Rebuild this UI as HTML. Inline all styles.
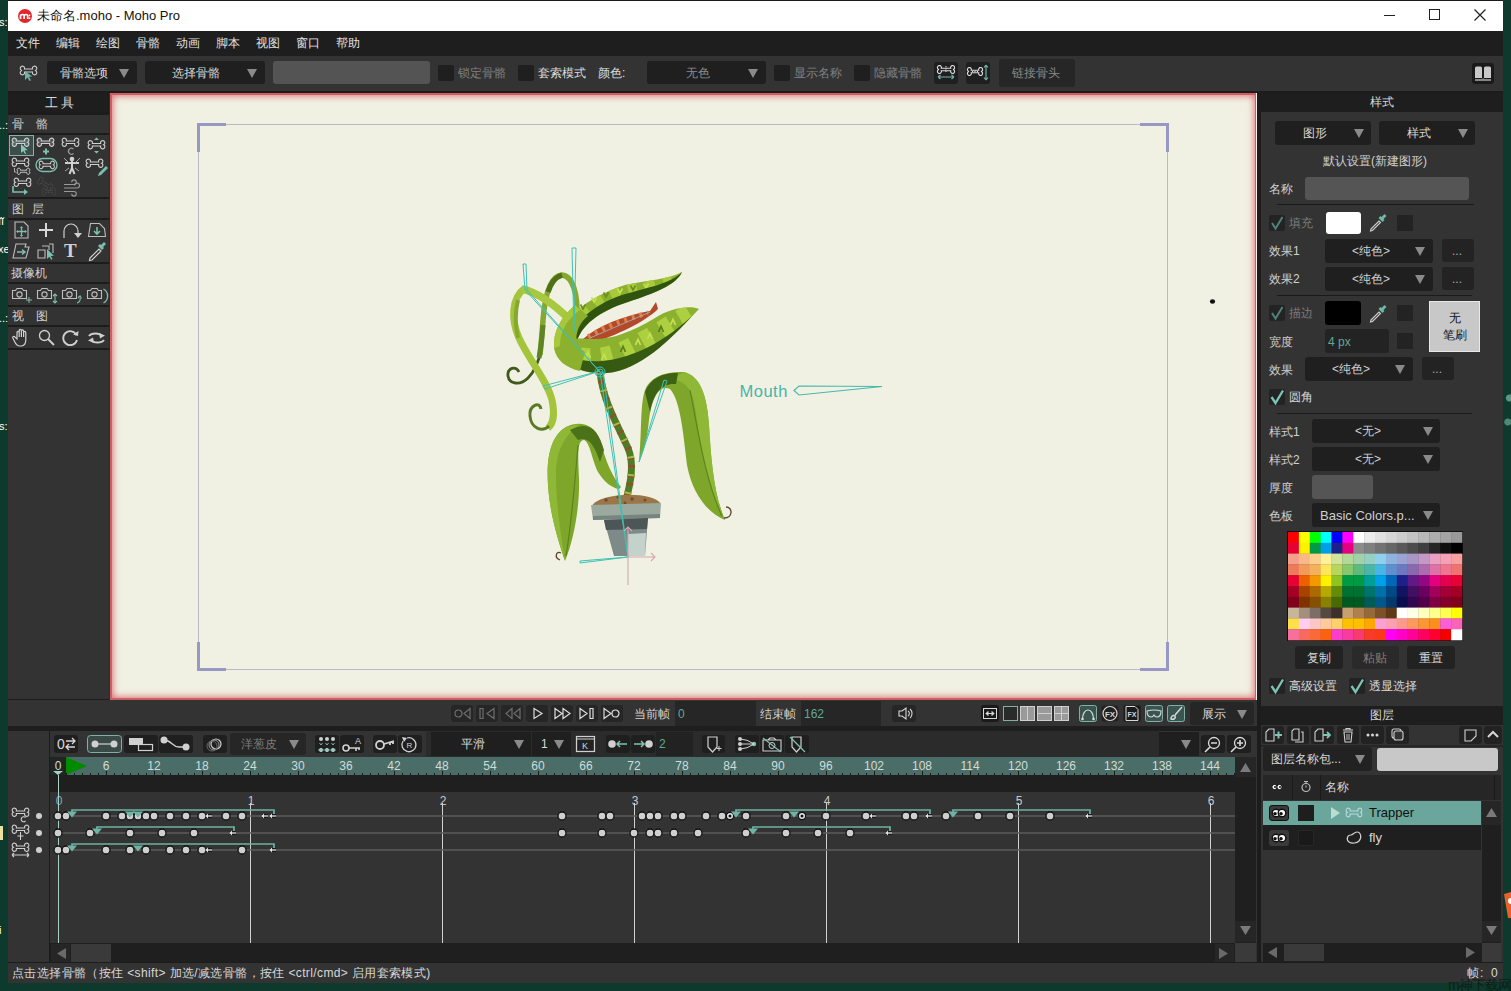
<!DOCTYPE html>
<html><head><meta charset="utf-8">
<style>
*{margin:0;padding:0;box-sizing:border-box}
html,body{width:1511px;height:991px;overflow:hidden;background:#0d3a2c;font-family:"Liberation Sans",sans-serif;color:#d8d8d8;font-size:12px}
.a{position:absolute}
.t{position:absolute;white-space:nowrap;line-height:1}
.dd{position:absolute;background:#1f1f1f;border-radius:3px}
.arr{position:absolute;width:0;height:0;border-left:5px solid transparent;border-right:5px solid transparent;border-top:9px solid #8a8a8a}
.cb{position:absolute;width:16px;height:16px;background:#1f1f1f;border-radius:2px}
.btn{position:absolute;background:#222;border-radius:3px}
svg{position:absolute;overflow:visible}
</style></head><body>
<!-- desktop fragments -->
<div class="t" style="left:-1px;top:17px;color:#fff;font-size:11px">s:</div>
<div class="t" style="left:-1px;top:120px;color:#fff;font-size:11px">..:</div>
<div class="t" style="left:-2px;top:216px;color:#fff;font-size:11px">ĩĭ</div>
<div class="t" style="left:-2px;top:244px;color:#fff;font-size:11px">xe</div>
<div class="t" style="left:-1px;top:313px;color:#fff;font-size:11px">..:</div>
<div class="t" style="left:-1px;top:421px;color:#fff;font-size:11px">s:</div>
<div class="a" style="left:0;top:826px;width:3px;height:14px;background:#f0e0a0"></div>
<div class="t" style="left:-1px;top:925px;color:#fff;font-size:11px">i</div>

<!-- title bar -->
<div class="a" style="left:8px;top:0;width:1495px;height:1px;background:#1a1a1a"></div>
<div class="a" style="left:8px;top:1px;width:1495px;height:30px;background:#fff"></div>
<div class="a" style="left:18px;top:9px;width:14px;height:14px;border-radius:50%;background:#e2262b"></div>
<svg style="left:18px;top:9px" width="14" height="14"><path d="M2.5,10V6.5q2.2-2 3.6,0V10M6.1,6.5q2.2-2 3.6,0V10" fill="none" stroke="#fff" stroke-width="1.7"/><circle cx="11.5" cy="6.3" r=".9" fill="#fff"/><circle cx="11.5" cy="9.2" r=".9" fill="#fff"/></svg>
<div class="t" style="left:37px;top:9px;color:#111;font-size:13px">未命名.moho - Moho Pro</div>
<div class="a" style="left:1384px;top:15px;width:11px;height:1px;background:#222"></div>
<div class="a" style="left:1429px;top:9px;width:11px;height:11px;border:1px solid #222"></div>
<svg style="left:1474px;top:9px" width="12" height="12"><path d="M0.5 0.5L11.5 11.5M11.5 0.5L0.5 11.5" stroke="#222" stroke-width="1.2"/></svg>

<!-- menu bar -->
<div class="a" style="left:8px;top:31px;width:1495px;height:25px;background:#1e1e1e"></div>
<div class="t" style="left:16px;top:37px;color:#e0e0e0">文件</div>
<div class="t" style="left:56px;top:37px;color:#e0e0e0">编辑</div>
<div class="t" style="left:96px;top:37px;color:#e0e0e0">绘图</div>
<div class="t" style="left:136px;top:37px;color:#e0e0e0">骨骼</div>
<div class="t" style="left:176px;top:37px;color:#e0e0e0">动画</div>
<div class="t" style="left:216px;top:37px;color:#e0e0e0">脚本</div>
<div class="t" style="left:256px;top:37px;color:#e0e0e0">视图</div>
<div class="t" style="left:296px;top:37px;color:#e0e0e0">窗口</div>
<div class="t" style="left:336px;top:37px;color:#e0e0e0">帮助</div>

<!-- toolbar -->
<div class="a" style="left:8px;top:56px;width:1495px;height:35px;background:#333"></div>
<div class="a" style="left:8px;top:91px;width:1495px;height:2px;background:#1c1c1c"></div>
<svg style="left:18px;top:62px" width="22" height="22" viewBox="0 0 22 22"><path d="M4 6.5a2.2 2.2 0 1 1 2.5-1.5h8a2.2 2.2 0 1 1 2.5 1.5a2.2 2.2 0 1 1 -2.5 1.5h-8a2.2 2.2 0 1 1 -2.5 -1.5z" fill="none" stroke="#cfcfcf" stroke-width="1.1" transform="translate(0,2)"/><path d="M7 9l0 9l2.5-2.5l2 3.5l1.5-.8l-2-3.4l3.3-.3z" fill="#6fb3a4"/></svg>
<div class="dd" style="left:47px;top:61px;width:90px;height:23px"></div>
<div class="t" style="left:60px;top:67px;color:#d8d8d8">骨骼选项</div>
<div class="arr" style="left:119px;top:69px"></div>
<div class="dd" style="left:145px;top:61px;width:120px;height:23px"></div>
<div class="t" style="left:172px;top:67px;color:#d8d8d8">选择骨骼</div>
<div class="arr" style="left:247px;top:69px"></div>
<div class="a" style="left:273px;top:61px;width:157px;height:23px;background:#545454;border-radius:3px"></div>
<div class="cb" style="left:438px;top:65px"></div>
<div class="t" style="left:458px;top:67px;color:#808080">锁定骨骼</div>
<div class="cb" style="left:518px;top:65px"></div>
<div class="t" style="left:538px;top:67px;color:#dcdcdc">套索模式</div>
<div class="t" style="left:598px;top:67px;color:#dcdcdc">颜色:</div>
<div class="dd" style="left:647px;top:61px;width:119px;height:23px"></div>
<div class="t" style="left:686px;top:67px;color:#8c8c8c">无色</div>
<div class="arr" style="left:748px;top:69px"></div>
<div class="cb" style="left:774px;top:65px"></div>
<div class="t" style="left:794px;top:67px;color:#808080">显示名称</div>
<div class="cb" style="left:854px;top:65px"></div>
<div class="t" style="left:874px;top:67px;color:#808080">隐藏骨骼</div>
<div class="btn" style="left:934px;top:62px;width:24px;height:22px;background:#1f1f1f"></div>
<svg style="left:934px;top:62px" width="24" height="22"><path d="M5 6.5a2 2 0 1 1 2.3-1.3h9.4a2 2 0 1 1 2.3 1.3a2 2 0 1 1 -2.3 1.3h-9.4a2 2 0 1 1 -2.3 -1.3z" fill="none" stroke="#ddd" stroke-width="1.1" transform="translate(0,1)"/><path d="M12 4v6" stroke="#ddd" stroke-dasharray="1.2 1.2"/><path d="M4 15h16M4 15l2.5-2M4 15l2.5 2M20 15l-2.5-2M20 15l-2.5 2" stroke="#6fb3a4" stroke-width="1.2" fill="none"/></svg>
<div class="btn" style="left:966px;top:62px;width:24px;height:22px;background:#1f1f1f"></div>
<svg style="left:966px;top:62px" width="24" height="22"><path d="M3 9.5a2 2 0 1 1 2.3-1.3h7.4a2 2 0 1 1 2.3 1.3a2 2 0 1 1 -2.3 1.3h-7.4a2 2 0 1 1 -2.3 -1.3z" fill="none" stroke="#ddd" stroke-width="1.1"/><path d="M6 9.5h7" stroke="#ddd" stroke-dasharray="1.2 1.2"/><path d="M20 3v15M20 3l-2 2.5M20 3l2 2.5M20 18l-2-2.5M20 18l2-2.5" stroke="#6fb3a4" stroke-width="1.2" fill="none"/></svg>
<div class="btn" style="left:999px;top:59px;width:76px;height:28px;background:#262626"></div>
<div class="t" style="left:1012px;top:67px;color:#8a8a8a">链接骨头</div>
<div class="btn" style="left:1472px;top:63px;width:22px;height:21px;background:#1a1a1a"></div>
<svg style="left:1472px;top:63px" width="22" height="21"><path d="M3,15V5q0-1.5 1.5-1.5h4q1.5,0 1.5,1.5V15zM12,15V5q0-1.5 1.5-1.5h4q1.5,0 1.5,1.5V15z" fill="#c8c8c8"/><path d="M3,17h16" stroke="#d0d0d0" stroke-width="1.2"/><path d="M11,15v2.5" stroke="#888" stroke-width="1"/></svg>

<!--TOOLBAR-->

<svg width="0" height="0" style="position:absolute"><defs>
<path id="bn" d="M5.1,3.4H14.9A2.5,2.5 0 1 1 18.28,5A2.5,2.5 0 1 1 14.9,6.6H5.1A2.5,2.5 0 1 1 1.72,5A2.5,2.5 0 1 1 5.1,3.4Z"/>
<path id="cam" d="M1.5,4.5h3l1.5-2h5l1.5,2h3v8h-14z"/>
</defs></svg>
<div class="a" style="left:8px;top:93px;width:101px;height:606px;background:#333"></div>
<div class="a" style="left:8px;top:93px;width:101px;height:19px;background:#1e1e1e"></div>
<div class="t" style="left:45px;top:96px;font-size:13px;color:#d8d8d8;letter-spacing:3px">工具</div>
<!-- separators -->
<div class="a" style="left:8px;top:112px;width:101px;height:3px;background:#1c1c1c"></div>
<div class="a" style="left:8px;top:133px;width:101px;height:2px;background:#1c1c1c"></div>
<div class="a" style="left:8px;top:197px;width:101px;height:2px;background:#1c1c1c"></div>
<div class="a" style="left:8px;top:218px;width:101px;height:2px;background:#1c1c1c"></div>
<div class="a" style="left:8px;top:262px;width:101px;height:2px;background:#1c1c1c"></div>
<div class="a" style="left:8px;top:282px;width:101px;height:2px;background:#1c1c1c"></div>
<div class="a" style="left:8px;top:305px;width:101px;height:2px;background:#1c1c1c"></div>
<div class="a" style="left:8px;top:325px;width:101px;height:2px;background:#1c1c1c"></div>
<div class="a" style="left:8px;top:348px;width:101px;height:2px;background:#1c1c1c"></div>
<div class="a" style="left:8px;top:699px;width:101px;height:1px;background:#1c1c1c"></div>
<div class="t" style="left:12px;top:118px;font-size:12px;color:#d0d0d0">骨</div>
<div class="t" style="left:36px;top:118px;font-size:12px;color:#d0d0d0">骼</div>
<div class="t" style="left:12px;top:203px;font-size:12px;color:#d0d0d0">图</div>
<div class="t" style="left:32px;top:203px;font-size:12px;color:#d0d0d0">层</div>
<div class="t" style="left:11px;top:267px;font-size:12px;color:#d0d0d0">摄像机</div>
<div class="t" style="left:12px;top:310px;font-size:12px;color:#d0d0d0">视</div>
<div class="t" style="left:36px;top:310px;font-size:12px;color:#d0d0d0">图</div>
<!-- bone tools -->
<div class="a" style="left:9px;top:135px;width:25px;height:21px;background:#3b4e4a;border:1px solid #88b0a6"></div>
<svg style="left:12px;top:138px" width="20" height="16"><use href="#bn" transform="translate(0,0) scale(.85)" fill="#5a6a66" stroke="#d0d0d0" stroke-width="1.2"/><path d="M9,6v9l2.2-2l1.8,3l1.2-.6l-1.7-3l3-.3z" fill="#8cc4b6"/></svg>
<svg style="left:37px;top:138px" width="20" height="17"><use href="#bn" transform="scale(.85)" fill="#555" stroke="#d0d0d0" stroke-width="1.2"/><path d="M9,10.5v6M6,13.5h6" stroke="#7dbfae" stroke-width="2"/></svg>
<svg style="left:62px;top:138px" width="20" height="17"><use href="#bn" transform="scale(.85)" fill="none" stroke="#d0d0d0" stroke-width="1.2"/><path d="M11.5,11a3,3 0 1 0 0,4.5" fill="none" stroke="#9a9a9a" stroke-width="1.3"/></svg>
<svg style="left:87px;top:137px" width="20" height="17"><use href="#bn" transform="translate(1,3.5) scale(.85)" fill="none" stroke="#d0d0d0" stroke-width="1.2"/><path d="M7,3h5l-2.5-2.5zM7,14h5l-2.5,2.5z" fill="#7dbfae"/></svg>
<svg style="left:12px;top:158px" width="20" height="18"><use href="#bn" transform="scale(.85)" fill="none" stroke="#d0d0d0" stroke-width="1.2"/><use href="#bn" transform="translate(5,10) scale(.65)" fill="none" stroke="#d0d0d0" stroke-width="1.4"/><path d="M2.5,10v4h2" fill="none" stroke="#aaa" stroke-width="1"/></svg>
<svg style="left:35px;top:157px" width="24" height="17"><rect x="1" y="1.5" width="21" height="13" rx="6.5" fill="none" stroke="#7dbfae" stroke-width="1.4"/><use href="#bn" transform="translate(4,4) scale(.78)" fill="none" stroke="#d0d0d0" stroke-width="1.3"/></svg>
<svg style="left:62px;top:156px" width="20" height="19"><circle cx="10" cy="3" r="2.3" fill="#d0d0d0"/><path d="M10,5v7M10,12l-2.5,6M10,12l2.5,6M3,7h14" stroke="#d0d0d0" stroke-width="2" fill="none"/><path d="M2,2l5,5M18,2l-5,5M3,15l4-3M17,15l-4-3" stroke="#aaa" stroke-width="1"/></svg>
<svg style="left:86px;top:158px" width="22" height="18"><use href="#bn" transform="translate(0,1) scale(.85)" fill="none" stroke="#d0d0d0" stroke-width="1.2"/><path d="M13,15l7-7l2,2l-7,7l-3,1z" fill="#7dbfae"/></svg>
<svg style="left:11px;top:178px" width="22" height="18"><use href="#bn" transform="translate(3,0) scale(.85)" fill="none" stroke="#d0d0d0" stroke-width="1.2"/><path d="M2,8v6h12" fill="none" stroke="#7dbfae" stroke-width="1.6"/><path d="M13,11l4,3l-4,3z" fill="#7dbfae"/></svg>
<svg style="left:36px;top:178px" width="22" height="19" opacity=".35"><use href="#bn" transform="translate(1,2) rotate(35 8 4) scale(.8)" fill="none" stroke="#aaa" stroke-width="1" stroke-dasharray="1 1"/><use href="#bn" transform="translate(6,10) scale(.7)" fill="none" stroke="#aaa" stroke-width="1" stroke-dasharray="1 1"/></svg>
<svg style="left:62px;top:179px" width="20" height="16"><path d="M2,5.5H12a2.3,2.3 0 1 0 -2.3,-2.3M2,9H15a2.5,2.5 0 1 0 -2.5,-2.5M2,12.5H12a2.3,2.3 0 1 1 -2.3,2.3" fill="none" stroke="#9a9a9a" stroke-width="1.1"/></svg>
<!-- layer tools -->
<svg style="left:13px;top:221px" width="18" height="18"><path d="M2,1h9l4,4v12h-13z" fill="none" stroke="#bdbdbd" stroke-width="1.1"/><path d="M8.5,6v9M4,10.5h9" stroke="#7dbfae" stroke-width="1.3"/><path d="M8.5,5l-1.5,2h3zM8.5,16l-1.5-2h3zM3,10.5l2-1.5v3zM14,10.5l-2-1.5v3z" fill="#7dbfae"/></svg>
<svg style="left:37px;top:222px" width="18" height="16"><path d="M9,1v14M2,8h14" stroke="#d8d8d8" stroke-width="2"/></svg>
<svg style="left:62px;top:221px" width="20" height="18"><path d="M2,17v-7a7,7 0 0 1 14,0v2" fill="none" stroke="#d0d0d0" stroke-width="1.2"/><path d="M12,12h8l-4,5z" fill="#d0d0d0"/></svg>
<svg style="left:87px;top:222px" width="20" height="16"><path d="M1.5,14.5l2-13h9l5,5l1,8z" fill="none" stroke="#bdbdbd" stroke-width="1.1"/><path d="M10,5v6M7,9l3,3l3-3" stroke="#7dbfae" stroke-width="1.6" fill="none"/></svg>
<svg style="left:12px;top:242px" width="20" height="18"><path d="M1,16l3-14h10l-1,3l4,0l-3,11z" fill="none" stroke="#bdbdbd" stroke-width="1.1"/><path d="M5,10h8M10,7.5l3,2.5l-3,2.5" stroke="#7dbfae" stroke-width="1.5" fill="none"/></svg>
<svg style="left:36px;top:242px" width="20" height="18"><path d="M2,8h7v8h-7zM6,4h7v4M13,2h4v9" fill="none" stroke="#bdbdbd" stroke-width="1.1"/><path d="M11,7v10l2.3-2.2l2,3l1.2-.7l-1.8-3l3.2-.3z" fill="#7dbfae"/></svg>
<div class="t" style="left:64px;top:241px;font-family:'Liberation Serif',serif;font-size:19px;font-weight:bold;color:#d0d0d0">T</div>
<svg style="left:87px;top:241px" width="20" height="20"><path d="M3,17l9-9l2,2l-9,9l-2.5,.5z" fill="none" stroke="#d0d0d0" stroke-width="1.2"/><path d="M11,5l2-2l1,1l3-3l2,2l-3,3l1,1l-2,2z" fill="#7dbfae"/></svg>
<!-- camera tools -->
<svg style="left:11px;top:286px" width="22" height="17"><use href="#cam" transform="translate(0,0)" fill="none" stroke="#bdbdbd" stroke-width="1.1"/><circle cx="8.5" cy="8.5" r="2.6" fill="none" stroke="#bdbdbd" stroke-width="1.1"/><path d="M18,11v6M15,14h6" stroke="#7dbfae" stroke-width="1"/></svg>
<svg style="left:36px;top:286px" width="22" height="17"><use href="#cam" fill="none" stroke="#bdbdbd" stroke-width="1.1"/><circle cx="8.5" cy="8.5" r="2.6" fill="none" stroke="#bdbdbd" stroke-width="1.1"/><path d="M19,8v9M17,10l2-2l2,2M17,15l2,2l2-2" stroke="#7dbfae" stroke-width="1.1" fill="none"/></svg>
<svg style="left:61px;top:286px" width="22" height="17"><use href="#cam" fill="none" stroke="#bdbdbd" stroke-width="1.1"/><circle cx="8.5" cy="8.5" r="2.6" fill="none" stroke="#bdbdbd" stroke-width="1.1"/><path d="M16,17a4,4 0 0 0 3-5M17,12l2-2l1.5,2.5" stroke="#7dbfae" stroke-width="1.1" fill="none"/></svg>
<svg style="left:86px;top:286px" width="22" height="18"><use href="#cam" fill="none" stroke="#bdbdbd" stroke-width="1.1"/><circle cx="8.5" cy="8.5" r="2.6" fill="none" stroke="#bdbdbd" stroke-width="1.1"/><path d="M17.5,3a8,8 0 0 1 0,14" stroke="#7dbfae" stroke-width="1.3" fill="none"/></svg>
<!-- view tools -->
<svg style="left:12px;top:328px" width="20" height="19"><path d="M5,11V4.5a1.1,1.1 0 0 1 2.2,0V9V2.5a1.1,1.1 0 0 1 2.2,0V9V3a1.1,1.1 0 0 1 2.2,0V9V4.5a1.1,1.1 0 0 1 2.2,0V12q0,5 -4,6h-2q-3,0 -5,-4l-2,-4a1,1 0 0 1 2,-1z" fill="none" stroke="#d0d0d0" stroke-width="1.2"/></svg>
<svg style="left:38px;top:329px" width="18" height="18"><circle cx="6.5" cy="6.5" r="5" fill="none" stroke="#d0d0d0" stroke-width="1.3"/><path d="M10,10l6,6" stroke="#d0d0d0" stroke-width="1.8"/></svg>
<svg style="left:62px;top:329px" width="18" height="18"><path d="M14.5,6A7,7 0 1 0 15,11" fill="none" stroke="#d0d0d0" stroke-width="1.8"/><path d="M11,5.5l5,1.5l.5-5z" fill="#d0d0d0"/></svg>
<svg style="left:86px;top:330px" width="21" height="16"><path d="M3,6a7,4 0 0 1 13,0M18,10a7,4 0 0 1 -13,0" fill="none" stroke="#d0d0d0" stroke-width="2"/><path d="M13,3l6,2.5l-5,3zM8,13l-6-2.5l5-3z" fill="#d0d0d0"/></svg>

<!--TOOLS-->

<div class="a" style="left:110px;top:93px;width:1147px;height:607px;background:#f0f1e3;box-shadow:inset 0 0 0 2px #cd5f63,inset 0 0 7px 3px #dc7276"></div>
<div class="a" style="left:1256px;top:93px;width:1px;height:607px;background:#fbeeee"></div>
<svg style="left:110px;top:93px" width="1147" height="607" viewBox="110 93 1147 607">
<rect x="198.5" y="124.5" width="969" height="545" fill="none" stroke="#bbbac4" stroke-width="1"/>
<path d="M198.5,152V124.5H226M1140,124.5H1167.5V152M1167.5,642V669.5H1140M226,669.5H198.5V642" fill="none" stroke="#9997c3" stroke-width="3"/>
<ellipse cx="1212.5" cy="301.5" rx="2.6" ry="2.2" fill="#111"/>
<!-- plant -->
<g id="plant">
<defs>
<clipPath id="cu"><path d="M557,345 C560,320 585,298 625,285 C650,280 670,279 682,272 C676,285 655,293 628,302 C600,311 580,325 576,345 Z"/></clipPath>
<clipPath id="cl"><path d="M557,345 C560,365 585,375 607,373 C640,370 670,340 699,309 C690,305 670,308 655,318 C630,333 610,340 590,339 C580,338 572,338 557,345 Z"/></clipPath>
</defs>
<!-- arch tendril -->
<path d="M541,350 C538,365 534,372 528,378 C520,386 509,384 508,376 C507,368 516,365 519,372" fill="none" stroke="#3f5a1a" stroke-width="2.8"/>
<path d="M577,318 C578,295 573,276 562,275 C550,276 545,295 543,320 C542,335 541,345 540,355" fill="none" stroke="#86a830" stroke-width="5.5"/>
<path d="M548,292 C551,282 556,277 562,275" fill="none" stroke="#4f7018" stroke-width="5.5"/>
<path d="M543,325 C542,338 541,348 539,358" fill="none" stroke="#5f8424" stroke-width="5"/>
<!-- big light ribbon -->
<path d="M525,288 C511,298 511,320 519,338 C529,360 547,380 552,400 C555,414 553,424 548,428" fill="none" stroke="#a4c43c" stroke-width="7"/>
<path d="M519,300 C516,312 516,325 519,338" fill="none" stroke="#86a830" stroke-width="4" transform="translate(-1,0)"/>
<path d="M549,426 C542,433 531,428 530,416 C529,405 540,401 541,409" fill="none" stroke="#5a7a24" stroke-width="3"/>
<path d="M522,289 C540,293 556,306 570,320" fill="none" stroke="#a8c840" stroke-width="7.5"/>
<!-- left leaf -->
<path d="M621,487 C612,476 606,462 600,440 C594,424 580,420 566,427 C552,435 546,455 548,485 C550,515 558,540 565,561 C574,540 580,505 579,478 C578,455 577,440 584,440 C590,442 592,460 598,472 C604,482 612,488 619,489Z" fill="#7ea62a"/>
<path d="M566,427 C552,435 546,455 548,485 C550,515 558,540 565,561 C560,530 556,500 556,475 C556,450 565,435 580,424 Z" fill="#8fb836"/>
<path d="M570,430 C590,420 598,430 604,450 L600,462 C594,444 588,436 578,440 Z" fill="#4b7218"/>
<path d="M578,445 C575,480 572,520 566,556" fill="none" stroke="#5b8420" stroke-width="1.2"/>
<path d="M561,553 C556,550 554,558 560,560" fill="none" stroke="#5a4030" stroke-width="1.3"/>
<!-- right leaf -->
<path d="M639,462 C642,430 640,405 645,390 C650,377 665,371 684,372 C700,376 707,395 709,425 C711,460 714,495 725,520 C706,512 692,492 687,465 C683,430 680,400 670,389 C660,384 652,396 649,420 C647,440 644,452 639,462Z" fill="#7ea62a"/>
<path d="M684,372 C700,376 707,395 709,425 C711,460 714,495 725,520 C708,490 700,450 697,420 C694,395 690,382 672,379Z" fill="#8fb836"/>
<path d="M645,392 C650,378 664,372 678,373 L676,384 C662,383 654,392 650,412 Z" fill="#3e6214"/>
<path d="M690,390 C698,430 705,480 722,516" fill="none" stroke="#5b8420" stroke-width="1.2"/>
<path d="M724,518 C733,518 733,507 726,507" fill="none" stroke="#5a4030" stroke-width="1.3"/>
<!-- stem -->
<path d="M600,372 C603,400 615,420 628,448 C635,465 630,485 626,500" fill="none" stroke="#4f7a26" stroke-width="7"/>
<path d="M600,372 C603,400 615,420 628,448 C635,465 630,485 626,500" fill="none" stroke="#9a4a2c" stroke-width="7" stroke-dasharray="3 6 2 7"/>
<path d="M600,372 C603,400 615,420 628,448 C635,465 630,485 626,500" fill="none" stroke="#9cc040" stroke-width="7" stroke-dasharray="2 16"/>
<!-- upper jaw -->
<path d="M557,345 C560,320 585,298 625,285 C650,280 670,279 682,272 C676,285 655,293 628,302 C600,311 580,325 576,345 Z" fill="#8cb12e"/>
<g clip-path="url(#cu)"><path d="M562,345 C570,318 595,298 630,289 C655,284 670,281 682,274" fill="none" stroke="#a9c93c" stroke-width="16" stroke-dasharray="9 9"/></g>
<path d="M580.5,304.5L583,309L585.5,304.5" fill="none" stroke="#6a9020" stroke-width="1.6"/><path d="M591.5,297.5L594,302L596.5,297.5" fill="none" stroke="#c4e050" stroke-width="1.6"/><path d="M603.5,292.5L606,297L608.5,292.5" fill="none" stroke="#6a9020" stroke-width="1.6"/><path d="M617.5,288.5L620,293L622.5,288.5" fill="none" stroke="#c4e050" stroke-width="1.6"/><path d="M630.5,285.5L633,290L635.5,285.5" fill="none" stroke="#6a9020" stroke-width="1.6"/><path d="M643.5,283.5L646,288L648.5,283.5" fill="none" stroke="#c4e050" stroke-width="1.6"/>
<path d="M682,272 C676,285 655,293 628,302 C600,311 580,325 576,345 L567,345 C571,325 592,305 622,295 C650,287 672,283 682,272 Z" fill="#30540f"/>
<!-- tongue -->
<path d="M583,339 C598,326 622,316 650,311 L656,302 L658,309 C645,322 615,336 592,343 Z" fill="#b5472a"/>
<path d="M588,337 C605,327 625,319 648,313" fill="none" stroke="#dc8048" stroke-width="5" stroke-dasharray="3 5"/>
<path d="M590,338 L650,312" fill="none" stroke="#9cc0b8" stroke-width=".8"/>
<!-- lower jaw -->
<path d="M557,345 C560,365 585,375 607,373 C640,370 670,340 699,309 C690,305 670,308 655,318 C630,333 610,340 590,339 C580,338 572,338 557,345 Z" fill="#8cb12e"/>
<g clip-path="url(#cl)"><path d="M560,348 C575,362 600,360 622,352 C648,340 672,324 697,310" fill="none" stroke="#acd040" stroke-width="20" stroke-dasharray="11 11"/></g>
<path d="M570.5,355L573,349.5L575.5,355" fill="none" stroke="#c4e050" stroke-width="1.8"/><path d="M585.5,358L588,352.5L590.5,358" fill="none" stroke="#c4e050" stroke-width="1.8"/><path d="M601.5,360L604,354.5L606.5,360" fill="none" stroke="#c4e050" stroke-width="1.8"/><path d="M620.5,352L623,346.5L625.5,352" fill="none" stroke="#5a8018" stroke-width="1.8"/><path d="M635.5,345L638,339.5L640.5,345" fill="none" stroke="#c4e050" stroke-width="1.8"/><path d="M647.5,339L650,333.5L652.5,339" fill="none" stroke="#c4e050" stroke-width="1.8"/><path d="M658.5,332L661,326.5L663.5,332" fill="none" stroke="#5a8018" stroke-width="1.8"/><path d="M670.5,325L673,319.5L675.5,325" fill="none" stroke="#c4e050" stroke-width="1.8"/>
<path d="M557,345 C560,365 585,375 607,373 C640,370 670,340 692,316 C668,338 640,355 610,360 C585,364 566,358 557,345 Z" fill="#365a12"/>
<path d="M575,305 C560,318 553,332 554,348 C556,360 566,368 580,371 L585,352 C578,348 575,340 577,333 C579,325 583,320 588,316 Z" fill="#8cb12e"/><path d="M575,305 C560,318 553,332 554,348 L560,346 C560,332 566,320 580,310Z" fill="#a6c83a"/>
<!-- pot -->
<path d="M592,506 C598,493 652,490 661,504Z" fill="#9b7648"/>
<g fill="#70502c"><circle cx="606" cy="500" r="1.8"/><circle cx="618" cy="497" r="1.6"/><circle cx="632" cy="499" r="1.8"/><circle cx="645" cy="500" r="1.6"/><circle cx="625" cy="503" r="1.4"/></g>
<path d="M591,505 L661,503 L660,518 L593,520Z" fill="#9ba99f"/>
<path d="M593,516 L660,514 L660,518 L593,520Z" fill="#77857f"/>
<path d="M604,520 L648,518 L645,556 L614,556Z" fill="#7d8a88"/>
<path d="M604,520 L648,518 L647,529 L606,530Z" fill="#4c5656"/>
<path d="M628,534 L646,533 L645,556 L628,556Z" fill="#c3d3cb"/>
<!-- bones -->
<g fill="none" stroke="#3ec1b5" stroke-width="1">
<path d="M572,248 L574,332 L576,248Z"/>
<path d="M523,264 L525,290 L600,372 L527,290 L526,264Z"/>
<path d="M543,386 L600,371 L545,389Z"/>
<path d="M600,372 L628,557 L603,372Z"/>
<path d="M664,380 L639,462 L667,381Z"/>
<path d="M580,561 L628,557 L580,563Z"/>
<circle cx="600" cy="372" r="5"/><circle cx="600" cy="372" r="3"/>
</g>
<g fill="none" stroke="#d4a8ae" stroke-width="1.1"><path d="M628,527v58M628,557h27M651,553l4,4l-4,4M624,531l4,-4l4,4"/></g>
</g>

<text x="739.5" y="397" font-family="Liberation Sans, sans-serif" font-size="16.5" letter-spacing=".5" fill="#45b5aa">Mouth</text>
<path d="M794,390.5L799,386L882,386.5L799,395Z" fill="none" stroke="#45b8ac" stroke-width="1.1"/>
</svg>

<!--CANVAS-->

<div class="a" style="left:1257px;top:93px;width:4px;height:890px;background:#1c1c1c"></div>
<div class="a" style="left:1261px;top:93px;width:242px;height:613px;background:#333"></div>
<div class="a" style="left:1261px;top:93px;width:242px;height:19px;background:#1e1e1e"></div>
<div class="t" style="left:1370px;top:96px;font-size:12px;color:#d8d8d8">样式</div>
<div class="dd" style="left:1275px;top:121px;width:96px;height:24px"></div>
<div class="t" style="left:1303px;top:127px;color:#d8d8d8">图形</div>
<div class="arr" style="left:1354px;top:129px"></div>
<div class="dd" style="left:1379px;top:121px;width:96px;height:24px"></div>
<div class="t" style="left:1407px;top:127px;color:#d8d8d8">样式</div>
<div class="arr" style="left:1458px;top:129px"></div>
<div class="t" style="left:1323px;top:155px;color:#d0d0d0">默认设置(新建图形)</div>
<div class="t" style="left:1269px;top:183px;color:#d0d0d0">名称</div>
<div class="a" style="left:1305px;top:177px;width:164px;height:23px;background:#555;border-radius:3px"></div>
<div class="a" style="left:1277px;top:204px;width:197px;height:1px;background:#1a1a1a"></div>
<!-- fill -->
<div class="cb" style="left:1269px;top:215px;background:#232323"></div>
<svg style="left:1269px;top:215px" width="16" height="16"><path d="M3,8l3.5,5.5L13.5,2" fill="none" stroke="#4f8277" stroke-width="2"/></svg>
<div class="t" style="left:1289px;top:217px;color:#7c7c7c">填充</div>
<div class="a" style="left:1326px;top:212px;width:35px;height:22px;background:#fff;border-radius:3px"></div>
<svg style="left:1369px;top:213px" width="18" height="18"><path d="M2,16l8-8l1.5,1.5l-8,8l-2,.5z" fill="none" stroke="#cfcfcf" stroke-width="1.1"/><path d="M9.5,5l2-2l1,1l3-3l2,2l-3,3l1,1l-2,2z" fill="#6fb8a8"/></svg>
<div class="a" style="left:1397px;top:215px;width:16px;height:16px;background:#232323"></div>
<div class="t" style="left:1269px;top:245px;color:#d0d0d0">效果1</div>
<div class="dd" style="left:1325px;top:239px;width:108px;height:24px"></div>
<div class="t" style="left:1352px;top:245px;color:#d0d0d0">&lt;纯色&gt;</div>
<div class="arr" style="left:1415px;top:247px"></div>
<div class="btn" style="left:1442px;top:239px;width:32px;height:23px;background:#232323"></div>
<div class="t" style="left:1452px;top:245px;color:#aaa">...</div>
<div class="t" style="left:1269px;top:273px;color:#d0d0d0">效果2</div>
<div class="dd" style="left:1325px;top:267px;width:108px;height:24px"></div>
<div class="t" style="left:1352px;top:273px;color:#d0d0d0">&lt;纯色&gt;</div>
<div class="arr" style="left:1415px;top:275px"></div>
<div class="btn" style="left:1442px;top:267px;width:32px;height:23px;background:#232323"></div>
<div class="t" style="left:1452px;top:273px;color:#aaa">...</div>
<div class="a" style="left:1277px;top:295px;width:195px;height:1px;background:#1a1a1a"></div>
<!-- stroke -->
<div class="cb" style="left:1269px;top:305px;background:#232323"></div>
<svg style="left:1269px;top:305px" width="16" height="16"><path d="M3,8l3.5,5.5L13.5,2" fill="none" stroke="#4f8277" stroke-width="2"/></svg>
<div class="t" style="left:1289px;top:307px;color:#7c7c7c">描边</div>
<div class="a" style="left:1325px;top:301px;width:36px;height:24px;background:#000;border-radius:3px"></div>
<svg style="left:1369px;top:304px" width="18" height="18"><path d="M2,16l8-8l1.5,1.5l-8,8l-2,.5z" fill="none" stroke="#cfcfcf" stroke-width="1.1"/><path d="M9.5,5l2-2l1,1l3-3l2,2l-3,3l1,1l-2,2z" fill="#6fb8a8"/></svg>
<div class="a" style="left:1397px;top:305px;width:16px;height:16px;background:#232323"></div>
<div class="a" style="left:1429px;top:301px;width:51px;height:51px;background:#c8c8c8;border:1px solid #e8e8e8"></div>
<div class="t" style="left:1449px;top:312px;color:#111">无</div>
<div class="t" style="left:1443px;top:329px;color:#111">笔刷</div>
<div class="t" style="left:1269px;top:336px;color:#d0d0d0">宽度</div>
<div class="a" style="left:1325px;top:329px;width:64px;height:24px;background:#232323;border-radius:3px"></div>
<div class="t" style="left:1328px;top:336px;color:#5fa898;font-size:12px">4 px</div>
<div class="a" style="left:1397px;top:333px;width:16px;height:16px;background:#232323"></div>
<div class="t" style="left:1269px;top:364px;color:#d0d0d0">效果</div>
<div class="dd" style="left:1305px;top:357px;width:108px;height:24px"></div>
<div class="t" style="left:1332px;top:363px;color:#d0d0d0">&lt;纯色&gt;</div>
<div class="arr" style="left:1395px;top:365px"></div>
<div class="btn" style="left:1422px;top:357px;width:32px;height:23px;background:#232323"></div>
<div class="t" style="left:1432px;top:363px;color:#aaa">...</div>
<div class="cb" style="left:1269px;top:389px;background:#232323"></div>
<svg style="left:1269px;top:389px" width="16" height="16"><path d="M2.5,8l4,6L14,1.5" fill="none" stroke="#7dc4b4" stroke-width="2.3"/></svg>
<div class="t" style="left:1289px;top:391px;color:#d8d8d8">圆角</div>
<div class="a" style="left:1277px;top:413px;width:195px;height:1px;background:#1a1a1a"></div>
<div class="t" style="left:1269px;top:426px;color:#d0d0d0">样式1</div>
<div class="dd" style="left:1312px;top:419px;width:128px;height:24px"></div>
<div class="t" style="left:1355px;top:425px;color:#d0d0d0">&lt;无&gt;</div>
<div class="arr" style="left:1423px;top:427px"></div>
<div class="t" style="left:1269px;top:454px;color:#d0d0d0">样式2</div>
<div class="dd" style="left:1312px;top:447px;width:128px;height:24px"></div>
<div class="t" style="left:1355px;top:453px;color:#d0d0d0">&lt;无&gt;</div>
<div class="arr" style="left:1423px;top:455px"></div>
<div class="t" style="left:1269px;top:482px;color:#d0d0d0">厚度</div>
<div class="a" style="left:1312px;top:475px;width:61px;height:24px;background:#555;border-radius:3px"></div>
<div class="t" style="left:1269px;top:510px;color:#d0d0d0">色板</div>
<div class="dd" style="left:1312px;top:503px;width:128px;height:24px"></div>
<div class="t" style="left:1320px;top:509px;color:#d0d0d0;font-size:13px">Basic Colors.p...</div>
<div class="arr" style="left:1423px;top:511px"></div>
<div class="a" style="left:1287px;top:531px;width:176px;height:110px;background:#111"></div>
<svg style="left:1288px;top:532px" width="174" height="108">
<rect x="0.00" y="0.00" width="11.18" height="11.10" fill="#ff0000"/>
<rect x="10.88" y="0.00" width="11.18" height="11.10" fill="#ffff00"/>
<rect x="21.75" y="0.00" width="11.18" height="11.10" fill="#00ff00"/>
<rect x="32.62" y="0.00" width="11.18" height="11.10" fill="#00ffff"/>
<rect x="43.50" y="0.00" width="11.18" height="11.10" fill="#0000ff"/>
<rect x="54.38" y="0.00" width="11.18" height="11.10" fill="#ff00ff"/>
<rect x="65.25" y="0.00" width="11.18" height="11.10" fill="#ffffff"/>
<rect x="76.12" y="0.00" width="11.18" height="11.10" fill="#ebebeb"/>
<rect x="87.00" y="0.00" width="11.18" height="11.10" fill="#e0e0e0"/>
<rect x="97.88" y="0.00" width="11.18" height="11.10" fill="#d6d6d6"/>
<rect x="108.75" y="0.00" width="11.18" height="11.10" fill="#cccccc"/>
<rect x="119.62" y="0.00" width="11.18" height="11.10" fill="#c2c2c2"/>
<rect x="130.50" y="0.00" width="11.18" height="11.10" fill="#b8b8b8"/>
<rect x="141.38" y="0.00" width="11.18" height="11.10" fill="#adadad"/>
<rect x="152.25" y="0.00" width="11.18" height="11.10" fill="#a3a3a3"/>
<rect x="163.12" y="0.00" width="11.18" height="11.10" fill="#999999"/>
<rect x="0.00" y="10.80" width="11.18" height="11.10" fill="#e60033"/>
<rect x="10.88" y="10.80" width="11.18" height="11.10" fill="#fff100"/>
<rect x="21.75" y="10.80" width="11.18" height="11.10" fill="#009944"/>
<rect x="32.62" y="10.80" width="11.18" height="11.10" fill="#00a0e9"/>
<rect x="43.50" y="10.80" width="11.18" height="11.10" fill="#1d2088"/>
<rect x="54.38" y="10.80" width="11.18" height="11.10" fill="#e4007f"/>
<rect x="65.25" y="10.80" width="11.18" height="11.10" fill="#8c8c8c"/>
<rect x="76.12" y="10.80" width="11.18" height="11.10" fill="#7f7f7f"/>
<rect x="87.00" y="10.80" width="11.18" height="11.10" fill="#727272"/>
<rect x="97.88" y="10.80" width="11.18" height="11.10" fill="#666666"/>
<rect x="108.75" y="10.80" width="11.18" height="11.10" fill="#595959"/>
<rect x="119.62" y="10.80" width="11.18" height="11.10" fill="#4c4c4c"/>
<rect x="130.50" y="10.80" width="11.18" height="11.10" fill="#3f3f3f"/>
<rect x="141.38" y="10.80" width="11.18" height="11.10" fill="#262626"/>
<rect x="152.25" y="10.80" width="11.18" height="11.10" fill="#101010"/>
<rect x="163.12" y="10.80" width="11.18" height="11.10" fill="#000000"/>
<rect x="0.00" y="21.60" width="11.18" height="11.10" fill="#f5a089"/>
<rect x="10.88" y="21.60" width="11.18" height="11.10" fill="#f8b888"/>
<rect x="21.75" y="21.60" width="11.18" height="11.10" fill="#fbce8b"/>
<rect x="32.62" y="21.60" width="11.18" height="11.10" fill="#fff29a"/>
<rect x="43.50" y="21.60" width="11.18" height="11.10" fill="#d2e49a"/>
<rect x="54.38" y="21.60" width="11.18" height="11.10" fill="#b3d898"/>
<rect x="65.25" y="21.60" width="11.18" height="11.10" fill="#a0d3a8"/>
<rect x="76.12" y="21.60" width="11.18" height="11.10" fill="#95d0c5"/>
<rect x="87.00" y="21.60" width="11.18" height="11.10" fill="#8fd0ee"/>
<rect x="97.88" y="21.60" width="11.18" height="11.10" fill="#8eb3dd"/>
<rect x="108.75" y="21.60" width="11.18" height="11.10" fill="#9aa3d3"/>
<rect x="119.62" y="21.60" width="11.18" height="11.10" fill="#a896c4"/>
<rect x="130.50" y="21.60" width="11.18" height="11.10" fill="#c499c5"/>
<rect x="141.38" y="21.60" width="11.18" height="11.10" fill="#e8a0c4"/>
<rect x="152.25" y="21.60" width="11.18" height="11.10" fill="#f5a0b5"/>
<rect x="163.12" y="21.60" width="11.18" height="11.10" fill="#f6a0a0"/>
<rect x="0.00" y="32.40" width="11.18" height="11.10" fill="#ee7a5c"/>
<rect x="10.88" y="32.40" width="11.18" height="11.10" fill="#f29a5c"/>
<rect x="21.75" y="32.40" width="11.18" height="11.10" fill="#f5b05c"/>
<rect x="32.62" y="32.40" width="11.18" height="11.10" fill="#fde65c"/>
<rect x="43.50" y="32.40" width="11.18" height="11.10" fill="#b9d65c"/>
<rect x="54.38" y="32.40" width="11.18" height="11.10" fill="#88c76c"/>
<rect x="65.25" y="32.40" width="11.18" height="11.10" fill="#5fba7d"/>
<rect x="76.12" y="32.40" width="11.18" height="11.10" fill="#4ab5a8"/>
<rect x="87.00" y="32.40" width="11.18" height="11.10" fill="#45b6e6"/>
<rect x="97.88" y="32.40" width="11.18" height="11.10" fill="#5f8fcf"/>
<rect x="108.75" y="32.40" width="11.18" height="11.10" fill="#6e78c0"/>
<rect x="119.62" y="32.40" width="11.18" height="11.10" fill="#8a68b0"/>
<rect x="130.50" y="32.40" width="11.18" height="11.10" fill="#ad6bb0"/>
<rect x="141.38" y="32.40" width="11.18" height="11.10" fill="#e070a8"/>
<rect x="152.25" y="32.40" width="11.18" height="11.10" fill="#ef7490"/>
<rect x="163.12" y="32.40" width="11.18" height="11.10" fill="#ef7470"/>
<rect x="0.00" y="43.20" width="11.18" height="11.10" fill="#e60033"/>
<rect x="10.88" y="43.20" width="11.18" height="11.10" fill="#eb6100"/>
<rect x="21.75" y="43.20" width="11.18" height="11.10" fill="#f39800"/>
<rect x="32.62" y="43.20" width="11.18" height="11.10" fill="#fff100"/>
<rect x="43.50" y="43.20" width="11.18" height="11.10" fill="#8fc31f"/>
<rect x="54.38" y="43.20" width="11.18" height="11.10" fill="#009944"/>
<rect x="65.25" y="43.20" width="11.18" height="11.10" fill="#009944"/>
<rect x="76.12" y="43.20" width="11.18" height="11.10" fill="#009e96"/>
<rect x="87.00" y="43.20" width="11.18" height="11.10" fill="#00a0e9"/>
<rect x="97.88" y="43.20" width="11.18" height="11.10" fill="#0068b7"/>
<rect x="108.75" y="43.20" width="11.18" height="11.10" fill="#1d2088"/>
<rect x="119.62" y="43.20" width="11.18" height="11.10" fill="#601986"/>
<rect x="130.50" y="43.20" width="11.18" height="11.10" fill="#920783"/>
<rect x="141.38" y="43.20" width="11.18" height="11.10" fill="#e4007f"/>
<rect x="152.25" y="43.20" width="11.18" height="11.10" fill="#e5004f"/>
<rect x="163.12" y="43.20" width="11.18" height="11.10" fill="#e60033"/>
<rect x="0.00" y="54.00" width="11.18" height="11.10" fill="#a40026"/>
<rect x="10.88" y="54.00" width="11.18" height="11.10" fill="#a84200"/>
<rect x="21.75" y="54.00" width="11.18" height="11.10" fill="#ad6a00"/>
<rect x="32.62" y="54.00" width="11.18" height="11.10" fill="#b5aa00"/>
<rect x="43.50" y="54.00" width="11.18" height="11.10" fill="#638c0b"/>
<rect x="54.38" y="54.00" width="11.18" height="11.10" fill="#007130"/>
<rect x="65.25" y="54.00" width="11.18" height="11.10" fill="#007130"/>
<rect x="76.12" y="54.00" width="11.18" height="11.10" fill="#00736d"/>
<rect x="87.00" y="54.00" width="11.18" height="11.10" fill="#0071a7"/>
<rect x="97.88" y="54.00" width="11.18" height="11.10" fill="#004986"/>
<rect x="108.75" y="54.00" width="11.18" height="11.10" fill="#111461"/>
<rect x="119.62" y="54.00" width="11.18" height="11.10" fill="#420f62"/>
<rect x="130.50" y="54.00" width="11.18" height="11.10" fill="#6a005f"/>
<rect x="141.38" y="54.00" width="11.18" height="11.10" fill="#a2005b"/>
<rect x="152.25" y="54.00" width="11.18" height="11.10" fill="#a40038"/>
<rect x="163.12" y="54.00" width="11.18" height="11.10" fill="#a40026"/>
<rect x="0.00" y="64.80" width="11.18" height="11.10" fill="#80001b"/>
<rect x="10.88" y="64.80" width="11.18" height="11.10" fill="#7f3100"/>
<rect x="21.75" y="64.80" width="11.18" height="11.10" fill="#855000"/>
<rect x="32.62" y="64.80" width="11.18" height="11.10" fill="#888200"/>
<rect x="43.50" y="64.80" width="11.18" height="11.10" fill="#476b00"/>
<rect x="54.38" y="64.80" width="11.18" height="11.10" fill="#005920"/>
<rect x="65.25" y="64.80" width="11.18" height="11.10" fill="#005920"/>
<rect x="76.12" y="64.80" width="11.18" height="11.10" fill="#005a55"/>
<rect x="87.00" y="64.80" width="11.18" height="11.10" fill="#00588a"/>
<rect x="97.88" y="64.80" width="11.18" height="11.10" fill="#00396b"/>
<rect x="108.75" y="64.80" width="11.18" height="11.10" fill="#0a0d4e"/>
<rect x="119.62" y="64.80" width="11.18" height="11.10" fill="#330750"/>
<rect x="130.50" y="64.80" width="11.18" height="11.10" fill="#53004a"/>
<rect x="141.38" y="64.80" width="11.18" height="11.10" fill="#800046"/>
<rect x="152.25" y="64.80" width="11.18" height="11.10" fill="#83002b"/>
<rect x="163.12" y="64.80" width="11.18" height="11.10" fill="#80001b"/>
<rect x="0.00" y="75.60" width="11.18" height="11.10" fill="#c9b49c"/>
<rect x="10.88" y="75.60" width="11.18" height="11.10" fill="#a48f7c"/>
<rect x="21.75" y="75.60" width="11.18" height="11.10" fill="#7c6e66"/>
<rect x="32.62" y="75.60" width="11.18" height="11.10" fill="#54483f"/>
<rect x="43.50" y="75.60" width="11.18" height="11.10" fill="#3d302b"/>
<rect x="54.38" y="75.60" width="11.18" height="11.10" fill="#c8a070"/>
<rect x="65.25" y="75.60" width="11.18" height="11.10" fill="#b08050"/>
<rect x="76.12" y="75.60" width="11.18" height="11.10" fill="#946a3a"/>
<rect x="87.00" y="75.60" width="11.18" height="11.10" fill="#7c5028"/>
<rect x="97.88" y="75.60" width="11.18" height="11.10" fill="#5e3a18"/>
<rect x="108.75" y="75.60" width="11.18" height="11.10" fill="#ffffff"/>
<rect x="119.62" y="75.60" width="11.18" height="11.10" fill="#ffffe8"/>
<rect x="130.50" y="75.60" width="11.18" height="11.10" fill="#ffffc0"/>
<rect x="141.38" y="75.60" width="11.18" height="11.10" fill="#ffff90"/>
<rect x="152.25" y="75.60" width="11.18" height="11.10" fill="#ffff50"/>
<rect x="163.12" y="75.60" width="11.18" height="11.10" fill="#ffff00"/>
<rect x="0.00" y="86.40" width="11.18" height="11.10" fill="#fde046"/>
<rect x="10.88" y="86.40" width="11.18" height="11.10" fill="#fecdf0"/>
<rect x="21.75" y="86.40" width="11.18" height="11.10" fill="#fcc6c6"/>
<rect x="32.62" y="86.40" width="11.18" height="11.10" fill="#fdca9e"/>
<rect x="43.50" y="86.40" width="11.18" height="11.10" fill="#fdd06a"/>
<rect x="54.38" y="86.40" width="11.18" height="11.10" fill="#fcc100"/>
<rect x="65.25" y="86.40" width="11.18" height="11.10" fill="#fdbf00"/>
<rect x="76.12" y="86.40" width="11.18" height="11.10" fill="#fca800"/>
<rect x="87.00" y="86.40" width="11.18" height="11.10" fill="#fb9fd8"/>
<rect x="97.88" y="86.40" width="11.18" height="11.10" fill="#fba0b0"/>
<rect x="108.75" y="86.40" width="11.18" height="11.10" fill="#fb9a8a"/>
<rect x="119.62" y="86.40" width="11.18" height="11.10" fill="#fb9a5c"/>
<rect x="130.50" y="86.40" width="11.18" height="11.10" fill="#fb9634"/>
<rect x="141.38" y="86.40" width="11.18" height="11.10" fill="#fb8f1e"/>
<rect x="152.25" y="86.40" width="11.18" height="11.10" fill="#fb5fd6"/>
<rect x="163.12" y="86.40" width="11.18" height="11.10" fill="#fb63b8"/>
<rect x="0.00" y="97.20" width="11.18" height="11.10" fill="#f7709a"/>
<rect x="10.88" y="97.20" width="11.18" height="11.10" fill="#f86a60"/>
<rect x="21.75" y="97.20" width="11.18" height="11.10" fill="#f96a38"/>
<rect x="32.62" y="97.20" width="11.18" height="11.10" fill="#fa6210"/>
<rect x="43.50" y="97.20" width="11.18" height="11.10" fill="#fa3ec9"/>
<rect x="54.38" y="97.20" width="11.18" height="11.10" fill="#f93aa0"/>
<rect x="65.25" y="97.20" width="11.18" height="11.10" fill="#f93a70"/>
<rect x="76.12" y="97.20" width="11.18" height="11.10" fill="#f83a28"/>
<rect x="87.00" y="97.20" width="11.18" height="11.10" fill="#f83a18"/>
<rect x="97.88" y="97.20" width="11.18" height="11.10" fill="#ff00f5"/>
<rect x="108.75" y="97.20" width="11.18" height="11.10" fill="#ff00c8"/>
<rect x="119.62" y="97.20" width="11.18" height="11.10" fill="#ff0098"/>
<rect x="130.50" y="97.20" width="11.18" height="11.10" fill="#ff0060"/>
<rect x="141.38" y="97.20" width="11.18" height="11.10" fill="#ff0030"/>
<rect x="152.25" y="97.20" width="11.18" height="11.10" fill="#f50000"/>
<rect x="163.12" y="97.20" width="11.18" height="11.10" fill="#ffffff"/>
</svg>
<div class="btn" style="left:1295px;top:646px;width:48px;height:23px;background:#222"></div>
<div class="t" style="left:1307px;top:652px;color:#d8d8d8">复制</div>
<div class="btn" style="left:1352px;top:646px;width:47px;height:23px;background:#2a2a2a"></div>
<div class="t" style="left:1363px;top:652px;color:#808080">粘贴</div>
<div class="btn" style="left:1407px;top:646px;width:48px;height:23px;background:#222"></div>
<div class="t" style="left:1419px;top:652px;color:#d8d8d8">重置</div>
<div class="cb" style="left:1269px;top:678px;background:#232323"></div>
<svg style="left:1269px;top:678px" width="16" height="16"><path d="M2.5,8l4,6L14,1.5" fill="none" stroke="#7dc4b4" stroke-width="2.3"/></svg>
<div class="t" style="left:1289px;top:680px;color:#d8d8d8">高级设置</div>
<div class="cb" style="left:1349px;top:678px;background:#232323"></div>
<svg style="left:1349px;top:678px" width="16" height="16"><path d="M2.5,8l4,6L14,1.5" fill="none" stroke="#7dc4b4" stroke-width="2.3"/></svg>
<div class="t" style="left:1369px;top:680px;color:#d8d8d8">透显选择</div>

<!-- layers panel -->
<div class="a" style="left:1261px;top:706px;width:242px;height:257px;background:#333"></div>
<div class="a" style="left:1261px;top:706px;width:242px;height:19px;background:#1e1e1e"></div>
<div class="t" style="left:1370px;top:709px;color:#d8d8d8">图层</div>
<div class="btn" style="left:1262px;top:726px;width:22px;height:18px;background:#222"></div>
<svg style="left:1262px;top:726px" width="22" height="18"><path d="M4,15V6l3-3h5v12z" fill="none" stroke="#d0d0d0" stroke-width="1.1"/><path d="M13,9h7M16.5,5.5v7" stroke="#7dc4b4" stroke-width="2"/></svg>
<div class="btn" style="left:1287px;top:726px;width:22px;height:18px;background:#222"></div>
<svg style="left:1287px;top:726px" width="22" height="18"><path d="M5,14V5l2-2h5v11zM8,16h8V6h-2" fill="none" stroke="#d0d0d0" stroke-width="1.1"/></svg>
<div class="btn" style="left:1311px;top:726px;width:23px;height:18px;background:#222"></div>
<svg style="left:1311px;top:726px" width="23" height="18"><path d="M4,15V6l3-3h5v12z" fill="none" stroke="#d0d0d0" stroke-width="1.1"/><path d="M12,9h7M16,6l3,3l-3,3" fill="none" stroke="#7dc4b4" stroke-width="1.8"/></svg>
<div class="btn" style="left:1337px;top:726px;width:22px;height:18px;background:#222"></div>
<svg style="left:1337px;top:726px" width="22" height="18"><path d="M6,4h10M9,4V2.5h4V4M7,6h8l-1,10h-6z" fill="none" stroke="#d0d0d0" stroke-width="1.1"/><path d="M10,8v6M12,8v6" stroke="#d0d0d0" stroke-width=".9"/></svg>
<div class="btn" style="left:1361px;top:726px;width:23px;height:18px;background:#222"></div>
<svg style="left:1361px;top:726px" width="23" height="18"><circle cx="7" cy="9" r="1.5" fill="#d8d8d8"/><circle cx="11.5" cy="9" r="1.5" fill="#d8d8d8"/><circle cx="16" cy="9" r="1.5" fill="#d8d8d8"/></svg>
<div class="btn" style="left:1386px;top:726px;width:23px;height:18px;background:#222"></div>
<svg style="left:1386px;top:726px" width="23" height="18"><rect x="6" y="3" width="9" height="9" rx="2" fill="none" stroke="#d0d0d0" stroke-width="1.1"/><rect x="8" y="5" width="9" height="9" rx="2" fill="#333" stroke="#d0d0d0" stroke-width="1.1"/></svg>
<div class="btn" style="left:1459px;top:726px;width:23px;height:18px;background:#222"></div>
<svg style="left:1459px;top:726px" width="23" height="18"><path d="M6,4h11v6l-5,5h-6z" fill="none" stroke="#d0d0d0" stroke-width="1.1"/></svg>
<div class="btn" style="left:1484px;top:726px;width:18px;height:18px;background:#222"></div>
<svg style="left:1484px;top:726px" width="18" height="18"><path d="M4,11l5-5l5,5" fill="none" stroke="#d8d8d8" stroke-width="2"/></svg>
<div class="a" style="left:1261px;top:745px;width:242px;height:2px;background:#262626"></div>
<div class="dd" style="left:1263px;top:747px;width:109px;height:24px;background:#222"></div>
<div class="t" style="left:1271px;top:753px;color:#d8d8d8">图层名称包...</div>
<div class="arr" style="left:1355px;top:755px"></div>
<div class="a" style="left:1377px;top:748px;width:121px;height:23px;background:#c8c8c8;border-radius:3px"></div>
<div class="a" style="left:1263px;top:775px;width:238px;height:25px;background:#262626"></div>
<div class="a" style="left:1292px;top:775px;width:1px;height:25px;background:#1a1a1a"></div>
<div class="a" style="left:1320px;top:775px;width:1px;height:25px;background:#1a1a1a"></div>
<div class="a" style="left:1494px;top:775px;width:1px;height:25px;background:#1a1a1a"></div>
<svg style="left:1271px;top:782px" width="12" height="10"><circle cx="3.5" cy="5" r="2.6" fill="#fff" stroke="#111"/><circle cx="8.5" cy="5" r="2.6" fill="#fff" stroke="#111"/><circle cx="4" cy="5" r="1" fill="#111"/><circle cx="9" cy="5" r="1" fill="#111"/></svg>
<svg style="left:1300px;top:780px" width="12" height="13"><circle cx="6" cy="7.5" r="4" fill="none" stroke="#bbb" stroke-width="1.2"/><path d="M4,1.5h4M6,1.5v2M6,7.5v-2" stroke="#bbb" stroke-width="1.1"/></svg>
<div class="t" style="left:1325px;top:781px;color:#d8d8d8">名称</div>
<!-- rows -->
<div class="a" style="left:1263px;top:801px;width:218px;height:24px;background:#6aa69c"></div>
<div class="a" style="left:1263px;top:825px;width:218px;height:25px;background:#1f1f1f"></div>
<div class="a" style="left:1263px;top:850px;width:218px;height:93px;background:#333"></div>
<div class="btn" style="left:1269px;top:805px;width:20px;height:16px;background:#3a3a3a;border:1px solid #111"></div>
<svg style="left:1271px;top:807px" width="16" height="12"><circle cx="5" cy="6" r="3.8" fill="#fff" stroke="#111" stroke-width="1.4"/><circle cx="11" cy="6" r="3.8" fill="#fff" stroke="#111" stroke-width="1.4"/><circle cx="4" cy="6.8" r="1.8" fill="#111"/><circle cx="10" cy="6.8" r="1.8" fill="#111"/></svg>
<div class="a" style="left:1298px;top:805px;width:16px;height:16px;background:#1e1e1e"></div>
<svg style="left:1330px;top:806px" width="12" height="14"><path d="M1,1l9,6l-9,6z" fill="#b9dcd5"/></svg>
<svg style="left:1346px;top:808px" width="17" height="10"><use href="#bn" transform="scale(.8,.9)" fill="none" stroke="#b9dcd5" stroke-width="1.2"/></svg>
<div class="t" style="left:1369px;top:806px;color:#111;font-size:13px">Trapper</div>
<div class="btn" style="left:1269px;top:830px;width:20px;height:16px;background:#3a3a3a"></div>
<svg style="left:1271px;top:832px" width="16" height="12"><circle cx="5" cy="6" r="3.8" fill="#fff" stroke="#111" stroke-width="1.4"/><circle cx="11" cy="6" r="3.8" fill="#fff" stroke="#111" stroke-width="1.4"/><circle cx="4" cy="6.8" r="1.8" fill="#111"/><circle cx="10" cy="6.8" r="1.8" fill="#111"/></svg>
<div class="a" style="left:1298px;top:830px;width:16px;height:16px;background:#1a1a1a;border:1px solid #262626"></div>
<svg style="left:1346px;top:830px" width="17" height="15"><path d="M3,12c-3-2-2-7,2-7c2,0 3,-3 6,-3c4,0 5,6 2,9c-2,2 -7,3 -10,1z" fill="none" stroke="#d0d0d0" stroke-width="1.2"/></svg>
<div class="t" style="left:1369px;top:831px;color:#d8d8d8;font-size:13px">fly</div>
<!-- vscroll -->
<div class="a" style="left:1482px;top:801px;width:19px;height:142px;background:#1f1f1f"></div>
<div class="a" style="left:1482px;top:801px;width:19px;height:24px;background:#262626"></div>
<svg style="left:1485px;top:806px" width="13" height="12"><path d="M1,11l5.5-9l5.5,9z" fill="#7a7a7a"/></svg>
<div class="a" style="left:1482px;top:921px;width:19px;height:21px;background:#262626"></div>
<svg style="left:1485px;top:925px" width="13" height="12"><path d="M1,1l5.5,9l5.5-9z" fill="#7a7a7a"/></svg>
<!-- hscroll -->
<div class="a" style="left:1263px;top:943px;width:238px;height:19px;background:#1f1f1f"></div>
<svg style="left:1266px;top:946px" width="12" height="13"><path d="M11,1l-9,5.5l9,5.5z" fill="#6a6a6a"/></svg>
<div class="a" style="left:1284px;top:944px;width:40px;height:17px;background:#3a3a3a"></div>
<svg style="left:1465px;top:946px" width="12" height="13"><path d="M1,1l9,5.5l-9,5.5z" fill="#6a6a6a"/></svg>
<div class="a" style="left:1482px;top:943px;width:19px;height:19px;background:#3a3a3a"></div>

<!--RIGHT-->

<!--TL-->
<div class="a" style="left:8px;top:700px;width:1249px;height:26px;background:#333"></div>
<div class="a" style="left:8px;top:726px;width:1249px;height:5px;background:#1e1e1e"></div>
<div class="btn" style="left:451px;top:705px;width:22px;height:17px;background:#262626"></div>
<svg style="left:451px;top:705px" width="22" height="17"><path d="M4,8.5a3.5,3.5 0 1 0 7,0a3.5,3.5 0 1 0 -7,0M19,3.5l-6,5l6,5z" fill="none" stroke="#6e6e6e" stroke-width="1.2"/></svg>
<div class="btn" style="left:476px;top:705px;width:22px;height:17px;background:#262626"></div>
<svg style="left:476px;top:705px" width="22" height="17"><path d="M4,3.5h3v10h-3zM18,3.5l-7,5l7,5z" fill="none" stroke="#6e6e6e" stroke-width="1.2"/></svg>
<div class="btn" style="left:501px;top:705px;width:22px;height:17px;background:#262626"></div>
<svg style="left:501px;top:705px" width="22" height="17"><path d="M11,3.5l-6,5l6,5zM19,3.5l-6,5l6,5z" fill="none" stroke="#6e6e6e" stroke-width="1.2"/></svg>
<div class="btn" style="left:526px;top:705px;width:22px;height:17px;background:#262626"></div>
<svg style="left:526px;top:705px" width="22" height="17"><path d="M8,3.5l8,5l-8,5z" fill="none" stroke="#dcdcdc" stroke-width="1.2"/></svg>
<div class="btn" style="left:551px;top:705px;width:22px;height:17px;background:#262626"></div>
<svg style="left:551px;top:705px" width="22" height="17"><path d="M4,3.5l7,5l-7,5zM12,3.5l7,5l-7,5z" fill="none" stroke="#dcdcdc" stroke-width="1.2"/></svg>
<div class="btn" style="left:576px;top:705px;width:22px;height:17px;background:#262626"></div>
<svg style="left:576px;top:705px" width="22" height="17"><path d="M4,3.5l7,5l-7,5zM14,3.5h3v10h-3z" fill="none" stroke="#dcdcdc" stroke-width="1.2"/></svg>
<div class="btn" style="left:601px;top:705px;width:22px;height:17px;background:#262626"></div>
<svg style="left:601px;top:705px" width="22" height="17"><path d="M3,3.5l7,5l-7,5zM11,8.5a3.5,3.5 0 1 0 7,0a3.5,3.5 0 1 0 -7,0" fill="none" stroke="#dcdcdc" stroke-width="1.2"/></svg>
<div class="t" style="left:634px;top:708px;color:#d0d0d0">当前帧</div>
<div class="a" style="left:675px;top:701px;width:81px;height:25px;background:#262626"></div>
<div class="t" style="left:678px;top:708px;color:#5fa898">0</div>
<div class="t" style="left:760px;top:708px;color:#d0d0d0">结束帧</div>
<div class="a" style="left:801px;top:701px;width:80px;height:25px;background:#262626"></div>
<div class="t" style="left:804px;top:708px;color:#5fa898">162</div>
<div class="btn" style="left:892px;top:705px;width:24px;height:17px;background:#262626"></div>
<svg style="left:892px;top:705px" width="24" height="17"><path d="M7,6h3l4-3v11l-4-3h-3z" fill="none" stroke="#d8d8d8" stroke-width="1.1"/><path d="M16,6a3,3 0 0 1 0,5M18,4a6,6 0 0 1 0,9" fill="none" stroke="#d8d8d8" stroke-width="1.1"/></svg>
<div class="btn" style="left:981px;top:705px;width:18px;height:17px;background:#1a1a1a"></div>
<svg style="left:981px;top:705px" width="18" height="17"><rect x="2.5" y="3.5" width="13" height="10" fill="none" stroke="#d8d8d8"/><path d="M5,8.5h8M5,8.5l2-2v4zM13,8.5l-2-2v4z" stroke="#d8d8d8" fill="#d8d8d8"/></svg>
<svg style="left:1002px;top:705px" width="68" height="17"><rect x="1.5" y="1.5" width="14" height="14" fill="#2a2a2a" stroke="#7fb0a5"/><rect x="18.5" y="1.5" width="14" height="14" fill="#9a9a9a" stroke="#cfcfcf"/><path d="M25.5,1.5v14" stroke="#cfcfcf"/><rect x="35.5" y="1.5" width="14" height="14" fill="#9a9a9a" stroke="#cfcfcf"/><path d="M35.5,8.5h14" stroke="#cfcfcf"/><rect x="52.5" y="1.5" width="14" height="14" fill="#9a9a9a" stroke="#cfcfcf"/><path d="M52.5,8.5h14M59.5,1.5v14" stroke="#cfcfcf"/></svg>
<svg style="left:1079px;top:705px" width="18" height="17"><rect x=".5" y=".5" width="17" height="16" rx="2" fill="#3a5550" stroke="#7fb0a5"/><path d="M3.5,14a5.5,9 0 0 1 11,0" fill="none" stroke="#d8d8d8" stroke-width="1.2"/><circle cx="3.5" cy="14" r="1.3" fill="#d8d8d8"/><circle cx="14.5" cy="14" r="1.3" fill="#d8d8d8"/></svg>
<svg style="left:1101px;top:705px" width="18" height="17"><rect x=".5" y=".5" width="17" height="16" rx="3" fill="#222"/><circle cx="9" cy="8.5" r="7" fill="none" stroke="#d8d8d8" stroke-width="1.2"/><text x="9" y="11.5" font-size="8" font-weight="bold" text-anchor="middle" fill="#d8d8d8" font-family="Liberation Sans">FX</text></svg>
<svg style="left:1123px;top:705px" width="18" height="17"><rect x=".5" y=".5" width="17" height="16" fill="#1a1a1a"/><path d="M3,1.5h9l3,3v11h-12z" fill="none" stroke="#d8d8d8"/><text x="9" y="11.5" font-size="7" font-weight="bold" text-anchor="middle" fill="#d8d8d8" font-family="Liberation Sans">FX</text></svg>
<svg style="left:1145px;top:705px" width="18" height="17"><rect x=".5" y=".5" width="17" height="16" rx="2" fill="#3a5550" stroke="#7fb0a5"/><path d="M2,6q7,-2 14,0q0,6 -4,6q-2,0 -3,-2q-1,2 -3,2q-4,0 -4,-6z" fill="none" stroke="#d8d8d8" stroke-width="1.1"/></svg>
<svg style="left:1167px;top:705px" width="18" height="17"><rect x=".5" y=".5" width="17" height="16" rx="2" fill="#3a5550" stroke="#7fb0a5"/><path d="M15,2l-7,8M4,14c0-3 2-4 4-3c1,2 -1,4 -4,3z" fill="none" stroke="#d8d8d8" stroke-width="1.5"/></svg>
<div class="dd" style="left:1190px;top:702px;width:64px;height:23px;background:#262626"></div>
<div class="t" style="left:1202px;top:708px;color:#d8d8d8">展示</div>
<div class="arr" style="left:1237px;top:710px"></div>
<div class="a" style="left:8px;top:731px;width:1249px;height:232px;background:#333"></div>
<div class="a" style="left:49px;top:731px;width:1px;height:232px;background:#1c1c1c"></div>
<div class="a" style="left:426px;top:731px;width:733px;height:26px;background:#2b2b2b"></div>
<div class="dd" style="left:431px;top:732px;width:100px;height:24px;border-radius:0"></div>
<div class="t" style="left:461px;top:738px;color:#d8d8d8">平滑</div>
<div class="arr" style="left:514px;top:740px"></div>
<div class="dd" style="left:532px;top:732px;width:39px;height:24px;border-radius:0"></div>
<div class="t" style="left:541px;top:738px;color:#d8d8d8">1</div>
<div class="arr" style="left:554px;top:740px"></div>
<div class="dd" style="left:1159px;top:732px;width:40px;height:24px;border-radius:0"></div>
<div class="arr" style="left:1181px;top:740px"></div>
<div class="btn" style="left:54px;top:735px;width:24px;height:18px;background:#1f1f1f"></div>
<svg style="left:54px;top:735px" width="24" height="18"><text x="3" y="14" font-size="14" fill="#d8d8d8" font-family="Liberation Sans">0</text><path d="M12,6h9M18,3l3,3l-3,3M21,12h-9M15,9l-3,3l3,3" fill="none" stroke="#d8d8d8" stroke-width="1.3"/></svg>
<svg style="left:87px;top:735px" width="35" height="18"><rect x=".5" y=".5" width="34" height="17" rx="3" fill="#3a4a46" stroke="#7fb0a5"/><circle cx="8" cy="9" r="3.5" fill="#d0d0d0"/><circle cx="27" cy="9" r="3.5" fill="#d0d0d0"/><path d="M8,9h19" stroke="#d0d0d0" stroke-width="1.2"/></svg>
<div class="btn" style="left:124px;top:735px;width:34px;height:18px;background:#1f1f1f"></div>
<svg style="left:124px;top:735px" width="34" height="18"><rect x="5" y="3" width="14" height="7" fill="#d0d0d0"/><rect x="14.5" y="9.5" width="14" height="6" fill="none" stroke="#d0d0d0" stroke-width="1.2"/><rect x="5" y="3" width="10" height="7" fill="#d0d0d0"/></svg>
<div class="btn" style="left:159px;top:735px;width:34px;height:18px;background:#1f1f1f"></div>
<svg style="left:159px;top:735px" width="34" height="18"><circle cx="5" cy="5" r="3.5" fill="#d0d0d0"/><circle cx="27" cy="12" r="3.5" fill="#d0d0d0"/><path d="M5,5c8,0 8,7 15,7h5" fill="none" stroke="#d0d0d0" stroke-width="1.3"/></svg>
<div class="btn" style="left:203px;top:735px;width:24px;height:18px;background:#1f1f1f"></div>
<svg style="left:203px;top:735px" width="24" height="18"><circle cx="13" cy="9" r="5" fill="none" stroke="#d0d0d0" stroke-width="1.2"/><circle cx="11" cy="10" r="5" fill="none" stroke="#999" stroke-width="1"/><circle cx="9" cy="11" r="5" fill="none" stroke="#666" stroke-width="1"/></svg>
<div class="btn" style="left:315px;top:735px;width:24px;height:18px;background:#1f1f1f"></div>
<svg style="left:315px;top:735px" width="24" height="18"><g fill="#d0d0d0"><circle cx="6" cy="4" r="2"/><circle cx="12" cy="4" r="2"/><circle cx="18" cy="4" r="2"/></g><g fill="#bfe0d8"><circle cx="6" cy="15" r="2"/><circle cx="12" cy="15" r="2"/><circle cx="18" cy="15" r="2"/></g><path d="M4.5,8l1.5,2l1.5-2M10.5,8l1.5,2l1.5-2M16.5,8l1.5,2l1.5-2" fill="none" stroke="#7fb0a5"/><path d="M3,15h18" stroke="#7fb0a5"/></svg>
<div class="btn" style="left:340px;top:735px;width:24px;height:18px;background:#1f1f1f"></div>
<svg style="left:340px;top:735px" width="24" height="18"><circle cx="6" cy="13" r="3" fill="none" stroke="#d0d0d0" stroke-width="1.6"/><path d="M9,13h11M16,13v3M19,13v2" stroke="#d0d0d0" stroke-width="1.6"/><text x="15" y="9" font-size="9" fill="#d0d0d0" font-family="Liberation Sans">A</text></svg>
<div class="btn" style="left:373px;top:735px;width:24px;height:18px;background:#1f1f1f"></div>
<svg style="left:373px;top:735px" width="24" height="18"><circle cx="7" cy="10" r="4" fill="none" stroke="#d0d0d0" stroke-width="1.8"/><path d="M11,9l10,-3M17,7v3M20,6v3" stroke="#d0d0d0" stroke-width="1.8"/></svg>
<div class="btn" style="left:398px;top:735px;width:24px;height:18px;background:#1f1f1f"></div>
<svg style="left:398px;top:735px" width="24" height="18"><path d="M5,6a7,7 0 1 0 4,-3" fill="none" stroke="#d0d0d0" stroke-width="1.3"/><path d="M4,2l5,1l-3,4z" fill="#d0d0d0"/><text x="8.5" y="13" font-size="8" fill="#d0d0d0" font-family="Liberation Sans">R</text></svg>
<div class="btn" style="left:575px;top:735px;width:21px;height:18px;background:#222"></div>
<svg style="left:575px;top:735px" width="21" height="18"><rect x="1.5" y="1.5" width="18" height="15" fill="none" stroke="#cfcfcf" stroke-width="1.3"/><path d="M1.5,4h18" stroke="#cfcfcf"/><text x="7" y="14" font-size="9" fill="#d8d8d8" font-family="Liberation Sans">K</text></svg>
<div class="btn" style="left:606px;top:735px;width:24px;height:18px;background:#1f1f1f"></div>
<svg style="left:606px;top:735px" width="24" height="18"><circle cx="6" cy="9" r="3.8" fill="#d0d0d0"/><path d="M11,9h10M14,6l-3,3l3,3" fill="none" stroke="#7fc4b4" stroke-width="1.5"/></svg>
<div class="btn" style="left:631px;top:735px;width:24px;height:18px;background:#1f1f1f"></div>
<svg style="left:631px;top:735px" width="24" height="18"><circle cx="18" cy="9" r="3.8" fill="#d0d0d0"/><path d="M3,9h10M10,6l3,3l-3,3" fill="none" stroke="#7fc4b4" stroke-width="1.5"/></svg>
<div class="btn" style="left:702px;top:735px;width:23px;height:18px;background:#1f1f1f"></div>
<svg style="left:702px;top:735px" width="23" height="18"><path d="M6,2h9v10l-4.5,5l-4.5-5z" fill="none" stroke="#d0d0d0" stroke-width="1.2"/><path d="M17,11v5M14.5,13.5h5" stroke="#d0d0d0"/></svg>
<div class="btn" style="left:735px;top:735px;width:24px;height:18px;background:#1f1f1f"></div>
<svg style="left:735px;top:735px" width="24" height="18"><circle cx="5" cy="4" r="2" fill="#d0d0d0"/><circle cx="5" cy="9" r="2" fill="#d0d0d0"/><circle cx="5" cy="14" r="2" fill="#d0d0d0"/><circle cx="19" cy="9" r="2.2" fill="#7fc4b4"/><path d="M5,4q7,0 14,5M5,14q7,0 14,-5M5,9h14" fill="none" stroke="#d0d0d0"/></svg>
<div class="btn" style="left:760px;top:735px;width:24px;height:18px;background:#1f1f1f"></div>
<svg style="left:760px;top:735px" width="24" height="18"><path d="M3,5h18v11h-18zM8,5l2-2h4l2,2" fill="none" stroke="#d0d0d0" stroke-width="1.1"/><circle cx="12" cy="10.5" r="3" fill="none" stroke="#d0d0d0"/><path d="M3,3l18,14" stroke="#7fc4b4" stroke-width="1.1"/></svg>
<div class="btn" style="left:785px;top:735px;width:24px;height:18px;background:#1f1f1f"></div>
<svg style="left:785px;top:735px" width="24" height="18"><path d="M7,2h9v10l-4.5,5l-4.5-5z" fill="none" stroke="#d0d0d0" stroke-width="1.2"/><path d="M5,2l15,15" stroke="#7fc4b4" stroke-width="1.2"/></svg>
<div class="btn" style="left:1201px;top:735px;width:24px;height:18px;background:#1f1f1f"></div>
<svg style="left:1201px;top:735px" width="24" height="18"><circle cx="13" cy="8" r="5.5" fill="none" stroke="#d8d8d8" stroke-width="1.3"/><path d="M10,8h6M9,12l-5,5" stroke="#d8d8d8" stroke-width="1.6"/></svg>
<div class="btn" style="left:1227px;top:735px;width:24px;height:18px;background:#1f1f1f"></div>
<svg style="left:1227px;top:735px" width="24" height="18"><circle cx="13" cy="8" r="5.5" fill="none" stroke="#d8d8d8" stroke-width="1.3"/><path d="M10,8h6M13,5v6M9,12l-5,5" stroke="#d8d8d8" stroke-width="1.6"/></svg>
<div class="dd" style="left:230px;top:733px;width:76px;height:22px;background:#262626"></div>
<div class="t" style="left:241px;top:738px;color:#7c7c7c">洋葱皮</div>
<div class="arr" style="left:289px;top:740px"></div>
<div class="a" style="left:656px;top:732px;width:37px;height:24px;background:#222"></div>
<div class="t" style="left:659px;top:738px;color:#5fa898">2</div>
<div class="a" style="left:50px;top:757px;width:16px;height:18px;background:#1f2624"></div>
<div class="a" style="left:66px;top:757px;width:1169px;height:18px;background:#4a6d67"></div>
<svg style="left:50px;top:757px" width="1185" height="18" viewBox="50 757 1185 18"><path d="M66,757L87,766L66,775Z" fill="#008a00"/><path d="M66.5,773v2M74.5,773v2M82.5,773v2M90.5,773v2M98.5,773v2M106.5,771v4M114.5,773v2M122.5,773v2M130.5,773v2M138.5,773v2M146.5,773v2M154.5,771v4M162.5,773v2M170.5,773v2M178.5,773v2M186.5,773v2M194.5,773v2M202.5,771v4M210.5,773v2M218.5,773v2M226.5,773v2M234.5,773v2M242.5,773v2M250.5,771v4M258.5,773v2M266.5,773v2M274.5,773v2M282.5,773v2M290.5,773v2M298.5,771v4M306.5,773v2M314.5,773v2M322.5,773v2M330.5,773v2M338.5,773v2M346.5,771v4M354.5,773v2M362.5,773v2M370.5,773v2M378.5,773v2M386.5,773v2M394.5,771v4M402.5,773v2M410.5,773v2M418.5,773v2M426.5,773v2M434.5,773v2M442.5,771v4M450.5,773v2M458.5,773v2M466.5,773v2M474.5,773v2M482.5,773v2M490.5,771v4M498.5,773v2M506.5,773v2M514.5,773v2M522.5,773v2M530.5,773v2M538.5,771v4M546.5,773v2M554.5,773v2M562.5,773v2M570.5,773v2M578.5,773v2M586.5,771v4M594.5,773v2M602.5,773v2M610.5,773v2M618.5,773v2M626.5,773v2M634.5,771v4M642.5,773v2M650.5,773v2M658.5,773v2M666.5,773v2M674.5,773v2M682.5,771v4M690.5,773v2M698.5,773v2M706.5,773v2M714.5,773v2M722.5,773v2M730.5,771v4M738.5,773v2M746.5,773v2M754.5,773v2M762.5,773v2M770.5,773v2M778.5,771v4M786.5,773v2M794.5,773v2M802.5,773v2M810.5,773v2M818.5,773v2M826.5,771v4M834.5,773v2M842.5,773v2M850.5,773v2M858.5,773v2M866.5,773v2M874.5,771v4M882.5,773v2M890.5,773v2M898.5,773v2M906.5,773v2M914.5,773v2M922.5,771v4M930.5,773v2M938.5,773v2M946.5,773v2M954.5,773v2M962.5,773v2M970.5,771v4M978.5,773v2M986.5,773v2M994.5,773v2M1002.5,773v2M1010.5,773v2M1018.5,771v4M1026.5,773v2M1034.5,773v2M1042.5,773v2M1050.5,773v2M1058.5,773v2M1066.5,771v4M1074.5,773v2M1082.5,773v2M1090.5,773v2M1098.5,773v2M1106.5,773v2M1114.5,771v4M1122.5,773v2M1130.5,773v2M1138.5,773v2M1146.5,773v2M1154.5,773v2M1162.5,771v4M1170.5,773v2M1178.5,773v2M1186.5,773v2M1194.5,773v2M1202.5,773v2M1210.5,771v4M1218.5,773v2M1226.5,773v2M1234.5,773v2" stroke="#1a1a1a" stroke-width="1"/><text x="58" y="770" font-size="12" text-anchor="middle" fill="#d0dcd8" font-family="Liberation Sans">0</text><text x="106" y="770" font-size="12" text-anchor="middle" fill="#d0dcd8" font-family="Liberation Sans">6</text><text x="154" y="770" font-size="12" text-anchor="middle" fill="#d0dcd8" font-family="Liberation Sans">12</text><text x="202" y="770" font-size="12" text-anchor="middle" fill="#d0dcd8" font-family="Liberation Sans">18</text><text x="250" y="770" font-size="12" text-anchor="middle" fill="#d0dcd8" font-family="Liberation Sans">24</text><text x="298" y="770" font-size="12" text-anchor="middle" fill="#d0dcd8" font-family="Liberation Sans">30</text><text x="346" y="770" font-size="12" text-anchor="middle" fill="#d0dcd8" font-family="Liberation Sans">36</text><text x="394" y="770" font-size="12" text-anchor="middle" fill="#d0dcd8" font-family="Liberation Sans">42</text><text x="442" y="770" font-size="12" text-anchor="middle" fill="#d0dcd8" font-family="Liberation Sans">48</text><text x="490" y="770" font-size="12" text-anchor="middle" fill="#d0dcd8" font-family="Liberation Sans">54</text><text x="538" y="770" font-size="12" text-anchor="middle" fill="#d0dcd8" font-family="Liberation Sans">60</text><text x="586" y="770" font-size="12" text-anchor="middle" fill="#d0dcd8" font-family="Liberation Sans">66</text><text x="634" y="770" font-size="12" text-anchor="middle" fill="#d0dcd8" font-family="Liberation Sans">72</text><text x="682" y="770" font-size="12" text-anchor="middle" fill="#d0dcd8" font-family="Liberation Sans">78</text><text x="730" y="770" font-size="12" text-anchor="middle" fill="#d0dcd8" font-family="Liberation Sans">84</text><text x="778" y="770" font-size="12" text-anchor="middle" fill="#d0dcd8" font-family="Liberation Sans">90</text><text x="826" y="770" font-size="12" text-anchor="middle" fill="#d0dcd8" font-family="Liberation Sans">96</text><text x="874" y="770" font-size="12" text-anchor="middle" fill="#d0dcd8" font-family="Liberation Sans">102</text><text x="922" y="770" font-size="12" text-anchor="middle" fill="#d0dcd8" font-family="Liberation Sans">108</text><text x="970" y="770" font-size="12" text-anchor="middle" fill="#d0dcd8" font-family="Liberation Sans">114</text><text x="1018" y="770" font-size="12" text-anchor="middle" fill="#d0dcd8" font-family="Liberation Sans">120</text><text x="1066" y="770" font-size="12" text-anchor="middle" fill="#d0dcd8" font-family="Liberation Sans">126</text><text x="1114" y="770" font-size="12" text-anchor="middle" fill="#d0dcd8" font-family="Liberation Sans">132</text><text x="1162" y="770" font-size="12" text-anchor="middle" fill="#d0dcd8" font-family="Liberation Sans">138</text><text x="1210" y="770" font-size="12" text-anchor="middle" fill="#d0dcd8" font-family="Liberation Sans">144</text><path d="M53,771h10l-5,4z" fill="#a8d0c6"/></svg>
<div class="a" style="left:50px;top:775px;width:1185px;height:17px;background:#1f1f1f"></div>
<div class="a" style="left:58px;top:775px;width:1px;height:17px;background:#a8d0c6"></div>
<div class="a" style="left:1235px;top:757px;width:21px;height:186px;background:#1f1f1f"></div>
<div class="a" style="left:1235px;top:757px;width:21px;height:20px;background:#262626"></div>
<svg style="left:1239px;top:761px" width="13" height="12"><path d="M1,11l5.5-9l5.5,9z" fill="#7a7a7a"/></svg>
<div class="a" style="left:1235px;top:921px;width:21px;height:21px;background:#262626"></div>
<svg style="left:1239px;top:925px" width="13" height="12"><path d="M1,1l5.5,9l5.5-9z" fill="#7a7a7a"/></svg>
<div class="a" style="left:50px;top:943px;width:1185px;height:20px;background:#1f1f1f"></div>
<div class="a" style="left:51px;top:944px;width:19px;height:18px;background:#262626"></div>
<svg style="left:55px;top:947px" width="12" height="13"><path d="M11,1l-9,5.5l9,5.5z" fill="#6a6a6a"/></svg>
<div class="a" style="left:71px;top:944px;width:40px;height:18px;background:#3a3a3a"></div>
<div class="a" style="left:1215px;top:944px;width:19px;height:18px;background:#262626"></div>
<svg style="left:1218px;top:947px" width="12" height="13"><path d="M1,1l9,5.5l-9,5.5z" fill="#6a6a6a"/></svg>
<div class="a" style="left:1235px;top:943px;width:21px;height:20px;background:#3a3a3a"></div>
<svg style="left:50px;top:792px" width="1185" height="151" viewBox="50 792 1185 151"><path d="M250.5,803V943" stroke="#d0d0d0" stroke-width="1"/><text x="251" y="805" font-size="12" text-anchor="middle" fill="#c8c8c8" font-family="Liberation Sans">1</text><path d="M442.5,803V943" stroke="#d0d0d0" stroke-width="1"/><text x="443" y="805" font-size="12" text-anchor="middle" fill="#c8c8c8" font-family="Liberation Sans">2</text><path d="M634.5,803V943" stroke="#d0d0d0" stroke-width="1"/><text x="635" y="805" font-size="12" text-anchor="middle" fill="#c8c8c8" font-family="Liberation Sans">3</text><path d="M826.5,803V943" stroke="#d0d0d0" stroke-width="1"/><text x="827" y="805" font-size="12" text-anchor="middle" fill="#c8c8c8" font-family="Liberation Sans">4</text><path d="M1018.5,803V943" stroke="#d0d0d0" stroke-width="1"/><text x="1019" y="805" font-size="12" text-anchor="middle" fill="#c8c8c8" font-family="Liberation Sans">5</text><path d="M1210.5,803V943" stroke="#d0d0d0" stroke-width="1"/><text x="1211" y="805" font-size="12" text-anchor="middle" fill="#c8c8c8" font-family="Liberation Sans">6</text><text x="59" y="805" font-size="12" text-anchor="middle" fill="#8aa8a0" font-family="Liberation Sans">0</text><path d="M58,816H1235" stroke="#5c5c5c" stroke-width="1.6"/><path d="M58,833H1235" stroke="#5c5c5c" stroke-width="1.6"/><path d="M58,850H1235" stroke="#5c5c5c" stroke-width="1.6"/><path d="M58.5,792V943" stroke="#a8d0c6" stroke-width="1"/><circle cx="58" cy="816" r="4" fill="#cfcfcf" stroke="#111" stroke-width="1.3"/><circle cx="66" cy="816" r="4" fill="#cfcfcf" stroke="#111" stroke-width="1.3"/><circle cx="106" cy="816" r="4" fill="#cfcfcf" stroke="#111" stroke-width="1.3"/><circle cx="122" cy="816" r="4" fill="#cfcfcf" stroke="#111" stroke-width="1.3"/><circle cx="130" cy="816" r="4" fill="#cfcfcf" stroke="#111" stroke-width="1.3"/><circle cx="138" cy="816" r="4" fill="#cfcfcf" stroke="#111" stroke-width="1.3"/><circle cx="146" cy="816" r="4" fill="#cfcfcf" stroke="#111" stroke-width="1.3"/><circle cx="154" cy="816" r="4" fill="#cfcfcf" stroke="#111" stroke-width="1.3"/><circle cx="170" cy="816" r="4" fill="#cfcfcf" stroke="#111" stroke-width="1.3"/><circle cx="186" cy="816" r="4" fill="#cfcfcf" stroke="#111" stroke-width="1.3"/><circle cx="202" cy="816" r="4" fill="#cfcfcf" stroke="#111" stroke-width="1.3"/><circle cx="226" cy="816" r="4" fill="#cfcfcf" stroke="#111" stroke-width="1.3"/><circle cx="242" cy="816" r="4" fill="#cfcfcf" stroke="#111" stroke-width="1.3"/><circle cx="562" cy="816" r="4" fill="#cfcfcf" stroke="#111" stroke-width="1.3"/><circle cx="602" cy="816" r="4" fill="#cfcfcf" stroke="#111" stroke-width="1.3"/><circle cx="610" cy="816" r="4" fill="#cfcfcf" stroke="#111" stroke-width="1.3"/><circle cx="642" cy="816" r="4" fill="#cfcfcf" stroke="#111" stroke-width="1.3"/><circle cx="650" cy="816" r="4" fill="#cfcfcf" stroke="#111" stroke-width="1.3"/><circle cx="658" cy="816" r="4" fill="#cfcfcf" stroke="#111" stroke-width="1.3"/><circle cx="674" cy="816" r="4" fill="#cfcfcf" stroke="#111" stroke-width="1.3"/><circle cx="682" cy="816" r="4" fill="#cfcfcf" stroke="#111" stroke-width="1.3"/><circle cx="706" cy="816" r="4" fill="#cfcfcf" stroke="#111" stroke-width="1.3"/><circle cx="722" cy="816" r="4" fill="#cfcfcf" stroke="#111" stroke-width="1.3"/><circle cx="746" cy="816" r="4" fill="#cfcfcf" stroke="#111" stroke-width="1.3"/><circle cx="786" cy="816" r="4" fill="#cfcfcf" stroke="#111" stroke-width="1.3"/><circle cx="826" cy="816" r="4" fill="#cfcfcf" stroke="#111" stroke-width="1.3"/><circle cx="866" cy="816" r="4" fill="#cfcfcf" stroke="#111" stroke-width="1.3"/><circle cx="906" cy="816" r="4" fill="#cfcfcf" stroke="#111" stroke-width="1.3"/><circle cx="914" cy="816" r="4" fill="#cfcfcf" stroke="#111" stroke-width="1.3"/><circle cx="946" cy="816" r="4" fill="#cfcfcf" stroke="#111" stroke-width="1.3"/><circle cx="978" cy="816" r="4" fill="#cfcfcf" stroke="#111" stroke-width="1.3"/><circle cx="1010" cy="816" r="4" fill="#cfcfcf" stroke="#111" stroke-width="1.3"/><circle cx="1050" cy="816" r="4" fill="#cfcfcf" stroke="#111" stroke-width="1.3"/><circle cx="730" cy="816" r="3.6" fill="#e8e8e8" stroke="#111" stroke-width="1.2"/><circle cx="730" cy="816" r="1.5" fill="#111"/><circle cx="802" cy="816" r="3.6" fill="#e8e8e8" stroke="#111" stroke-width="1.2"/><circle cx="802" cy="816" r="1.5" fill="#111"/><circle cx="58" cy="833" r="4" fill="#cfcfcf" stroke="#111" stroke-width="1.3"/><circle cx="90" cy="833" r="4" fill="#cfcfcf" stroke="#111" stroke-width="1.3"/><circle cx="130" cy="833" r="4" fill="#cfcfcf" stroke="#111" stroke-width="1.3"/><circle cx="162" cy="833" r="4" fill="#cfcfcf" stroke="#111" stroke-width="1.3"/><circle cx="194" cy="833" r="4" fill="#cfcfcf" stroke="#111" stroke-width="1.3"/><circle cx="562" cy="833" r="4" fill="#cfcfcf" stroke="#111" stroke-width="1.3"/><circle cx="602" cy="833" r="4" fill="#cfcfcf" stroke="#111" stroke-width="1.3"/><circle cx="634" cy="833" r="4" fill="#cfcfcf" stroke="#111" stroke-width="1.3"/><circle cx="650" cy="833" r="4" fill="#cfcfcf" stroke="#111" stroke-width="1.3"/><circle cx="658" cy="833" r="4" fill="#cfcfcf" stroke="#111" stroke-width="1.3"/><circle cx="674" cy="833" r="4" fill="#cfcfcf" stroke="#111" stroke-width="1.3"/><circle cx="698" cy="833" r="4" fill="#cfcfcf" stroke="#111" stroke-width="1.3"/><circle cx="746" cy="833" r="4" fill="#cfcfcf" stroke="#111" stroke-width="1.3"/><circle cx="786" cy="833" r="4" fill="#cfcfcf" stroke="#111" stroke-width="1.3"/><circle cx="818" cy="833" r="4" fill="#cfcfcf" stroke="#111" stroke-width="1.3"/><circle cx="850" cy="833" r="4" fill="#cfcfcf" stroke="#111" stroke-width="1.3"/><circle cx="58" cy="850" r="4" fill="#cfcfcf" stroke="#111" stroke-width="1.3"/><circle cx="66" cy="850" r="4" fill="#cfcfcf" stroke="#111" stroke-width="1.3"/><circle cx="106" cy="850" r="4" fill="#cfcfcf" stroke="#111" stroke-width="1.3"/><circle cx="130" cy="850" r="4" fill="#cfcfcf" stroke="#111" stroke-width="1.3"/><circle cx="146" cy="850" r="4" fill="#cfcfcf" stroke="#111" stroke-width="1.3"/><circle cx="170" cy="850" r="4" fill="#cfcfcf" stroke="#111" stroke-width="1.3"/><circle cx="186" cy="850" r="4" fill="#cfcfcf" stroke="#111" stroke-width="1.3"/><circle cx="202" cy="850" r="4" fill="#cfcfcf" stroke="#111" stroke-width="1.3"/><circle cx="242" cy="850" r="4" fill="#cfcfcf" stroke="#111" stroke-width="1.3"/><path d="M72,814V810H274V814" fill="none" stroke="#6fb3a4" stroke-width="1.7"/><path d="M67,811.5h10l-5,6z" fill="#6fb3a4"/><path d="M125,811.5h10l-5,6z" fill="#6fb3a4"/><path d="M133,811.5h10l-5,6z" fill="#6fb3a4"/><path d="M97,831V827H234V831" fill="none" stroke="#6fb3a4" stroke-width="1.7"/><path d="M92,828.5h10l-5,6z" fill="#6fb3a4"/><path d="M72,848V844H274V848" fill="none" stroke="#6fb3a4" stroke-width="1.7"/><path d="M67,845.5h10l-5,6z" fill="#6fb3a4"/><path d="M133,845.5h10l-5,6z" fill="#6fb3a4"/><path d="M736,814V810H930V814" fill="none" stroke="#6fb3a4" stroke-width="1.7"/><path d="M731,811.5h10l-5,6z" fill="#6fb3a4"/><path d="M789,811.5h10l-5,6z" fill="#6fb3a4"/><path d="M753,831V827H890V831" fill="none" stroke="#6fb3a4" stroke-width="1.7"/><path d="M748,828.5h10l-5,6z" fill="#6fb3a4"/><path d="M953,814V810H1090V814" fill="none" stroke="#6fb3a4" stroke-width="1.7"/><path d="M948,811.5h10l-5,6z" fill="#6fb3a4"/><path d="M206,816h6" stroke="#111" stroke-width="3.5"/><path d="M206.5,816h5.5" stroke="#e8e8e8" stroke-width="1.3"/><path d="M205.5,816l2.5,-2.5v5z" fill="#e8e8e8"/><path d="M262,816h6" stroke="#111" stroke-width="3.5"/><path d="M262.5,816h5.5" stroke="#e8e8e8" stroke-width="1.3"/><path d="M261.5,816l2.5,-2.5v5z" fill="#e8e8e8"/><path d="M270,816h6" stroke="#111" stroke-width="3.5"/><path d="M270.5,816h5.5" stroke="#e8e8e8" stroke-width="1.3"/><path d="M269.5,816l2.5,-2.5v5z" fill="#e8e8e8"/><path d="M870,816h6" stroke="#111" stroke-width="3.5"/><path d="M870.5,816h5.5" stroke="#e8e8e8" stroke-width="1.3"/><path d="M869.5,816l2.5,-2.5v5z" fill="#e8e8e8"/><path d="M926,816h6" stroke="#111" stroke-width="3.5"/><path d="M926.5,816h5.5" stroke="#e8e8e8" stroke-width="1.3"/><path d="M925.5,816l2.5,-2.5v5z" fill="#e8e8e8"/><path d="M1086,816h6" stroke="#111" stroke-width="3.5"/><path d="M1086.5,816h5.5" stroke="#e8e8e8" stroke-width="1.3"/><path d="M1085.5,816l2.5,-2.5v5z" fill="#e8e8e8"/><path d="M230,833h6" stroke="#111" stroke-width="3.5"/><path d="M230.5,833h5.5" stroke="#e8e8e8" stroke-width="1.3"/><path d="M229.5,833l2.5,-2.5v5z" fill="#e8e8e8"/><path d="M886,833h6" stroke="#111" stroke-width="3.5"/><path d="M886.5,833h5.5" stroke="#e8e8e8" stroke-width="1.3"/><path d="M885.5,833l2.5,-2.5v5z" fill="#e8e8e8"/><path d="M206,850h6" stroke="#111" stroke-width="3.5"/><path d="M206.5,850h5.5" stroke="#e8e8e8" stroke-width="1.3"/><path d="M205.5,850l2.5,-2.5v5z" fill="#e8e8e8"/><path d="M270,850h6" stroke="#111" stroke-width="3.5"/><path d="M270.5,850h5.5" stroke="#e8e8e8" stroke-width="1.3"/><path d="M269.5,850l2.5,-2.5v5z" fill="#e8e8e8"/></svg>
<svg style="left:10px;top:806px" width="34" height="52"><use href="#bn" transform="translate(2,2) scale(.85)" fill="none" stroke="#cfcfcf" stroke-width="1.2"/><path d="M15.5,11.5a2.5,2.5 0 1 0 0,3.5" fill="none" stroke="#cfcfcf" stroke-width="1.1"/><use href="#bn" transform="translate(2,19) scale(.85)" fill="none" stroke="#cfcfcf" stroke-width="1.2"/><path d="M10.5,26v8M7.5,30h6" stroke="#cfcfcf" stroke-width="1.1"/><use href="#bn" transform="translate(2,37) scale(.85)" fill="none" stroke="#cfcfcf" stroke-width="1.2"/><path d="M2,49h17M2,49l2-2M2,49l2,2M19,49l-2-2M19,49l-2,2" stroke="#cfcfcf" stroke-width="1.1" fill="none"/><circle cx="29" cy="10" r="3" fill="#cfcfcf"/><circle cx="29" cy="27" r="3" fill="#cfcfcf"/><circle cx="29" cy="44" r="3" fill="#cfcfcf"/></svg>
<div class="a" style="left:8px;top:963px;width:1495px;height:20px;background:#333"></div>
<div class="a" style="left:8px;top:962px;width:1495px;height:1px;background:#1c1c1c"></div>
<div class="t" style="left:12px;top:967px;color:#d8d8d8;letter-spacing:.38px">点击选择骨骼（按住 &lt;shift&gt; 加选/减选骨骼，按住 &lt;ctrl/cmd&gt; 启用套索模式)</div>
<div class="t" style="left:1467px;top:967px;color:#d8d8d8">帧</div><div class="t" style="left:1480px;top:967px;color:#d8d8d8">:</div><div class="t" style="left:1491px;top:967px;color:#d8d8d8">0</div>
<!--/TL-->
<!--TIMELINE-->

<svg style="left:1503px;top:890px" width="8" height="30"><path d="M1,4 L8,2 L8,28 L5,28 Z" fill="#e8602a"/><circle cx="8" cy="11" r="3" fill="#fff"/></svg>
<div class="t" style="left:1448px;top:978px;color:#0b2119;font-size:14px;letter-spacing:-1px">m神下载网</div>
<div class="a" style="left:1503px;top:380px;width:8px;height:60px;background:radial-gradient(circle at 80% 30%,#5a9a84 0,#5a9a84 3px,transparent 4px),radial-gradient(circle at 60% 70%,#4e8a76 0,#4e8a76 3px,transparent 4px)"></div>
<!--STATUS-->
</body></html>
